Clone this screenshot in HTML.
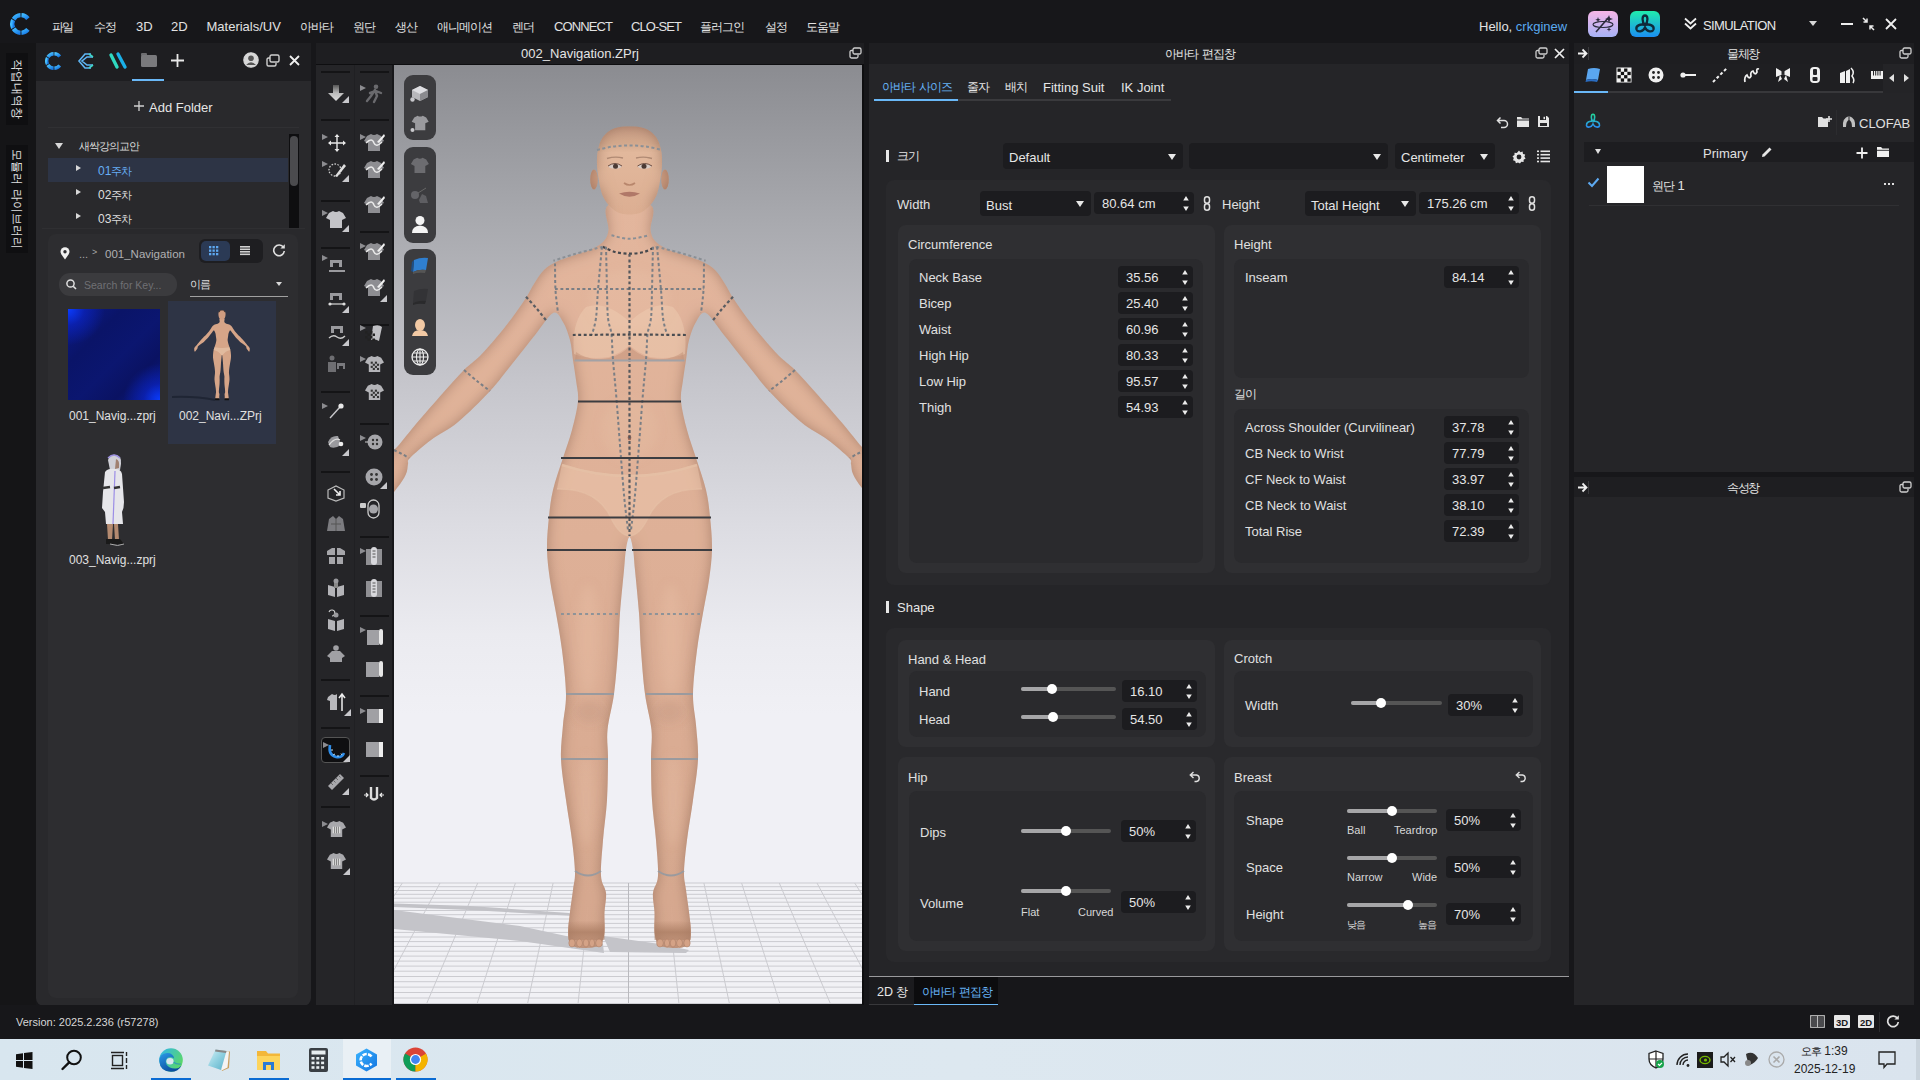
<!DOCTYPE html>
<html><head><meta charset="utf-8">
<style>
*{box-sizing:border-box;margin:0;padding:0}
html,body{width:1920px;height:1080px;overflow:hidden;background:#17171a;font-family:"Liberation Sans",sans-serif;color:#dcdcdc;font-size:13px}
.a{position:absolute}
.t{position:absolute;white-space:nowrap;line-height:1}
.c{text-align:center}
.k{font-size:0.92em;letter-spacing:-0.09em;word-spacing:0.2em}
svg{position:absolute;overflow:visible}
.spin{position:absolute;background:#1c1c1f;border-radius:4px;height:22px}
.spin .v{position:absolute;left:8px;top:5px;font-size:13px;line-height:1;color:#e6e6e6}
.spin .up,.spin .dn{position:absolute;right:6px;width:0;height:0;border-left:2.6px solid transparent;border-right:2.6px solid transparent}
.spin .up{top:4px;border-bottom:4.3px solid #e8e8e8}
.spin .dn{bottom:4px;border-top:4.3px solid #e8e8e8}
.dd{position:absolute;background:#1c1c1f;border-radius:4px;height:26px}
.dd .v{position:absolute;left:6px;top:7px;font-size:13px;line-height:1;color:#e6e6e6}
.dd .ar{position:absolute;right:7px;top:10px;width:0;height:0;border-left:4px solid transparent;border-right:4px solid transparent;border-top:6px solid #e8e8e8}
.lbl{position:absolute;white-space:nowrap;line-height:1;font-size:13px;color:#dedede}
.box1{position:absolute;background:#29292c;border-radius:8px}
.box2{position:absolute;background:#2f2f32;border-radius:8px}
.box3{position:absolute;background:#2a2a2d;border-radius:8px}
.sl{position:absolute;height:4px;background:#555;border-radius:2px}
.sl .f{position:absolute;left:0;top:0;height:4px;background:#a6a6a8;border-radius:2px}
.sl .kn{position:absolute;top:-3px;width:10px;height:10px;margin-left:-5px;background:#fff;border-radius:50%}
</style></head><body>

<div class="a" style="left:0px;top:0px;width:1920px;height:43px;background:#17171a;"></div>
<svg style="left:9px;top:12px" width="24" height="24" viewBox="0 0 24 24"><defs><linearGradient id="lg1" x1="0" y1="0" x2="1" y2="1"><stop offset="0" stop-color="#3fb8ff"/><stop offset="1" stop-color="#1a7de8"/></linearGradient></defs>
<path d="M18.93 6.58 A8.8 8.8 0 0 0 12.46 3.21" fill="none" stroke="url(#lg1)" stroke-width="4.3"/><path d="M11.54 3.21 A8.8 8.8 0 0 0 4.62 7.21" fill="none" stroke="url(#lg1)" stroke-width="4.3"/><path d="M4.16 8.00 A8.8 8.8 0 0 0 4.16 16.00" fill="none" stroke="url(#lg1)" stroke-width="4.3"/><path d="M4.62 16.79 A8.8 8.8 0 0 0 11.54 20.79" fill="none" stroke="url(#lg1)" stroke-width="4.3"/><path d="M12.46 20.79 A8.8 8.8 0 0 0 18.93 17.42" fill="none" stroke="url(#lg1)" stroke-width="4.3"/></svg>
<div class="t" style="left:51.5px;top:19.5px;font-size:13px;color:#e2e2e2;"><span class="k">파일</span></div>
<div class="t" style="left:94px;top:19.5px;font-size:13px;color:#e2e2e2;"><span class="k">수정</span></div>
<div class="t" style="left:136px;top:19.5px;font-size:13px;color:#e2e2e2;">3D</div>
<div class="t" style="left:171px;top:19.5px;font-size:13px;color:#e2e2e2;">2D</div>
<div class="t" style="left:206.5px;top:19.5px;font-size:13px;color:#e2e2e2;">Materials/UV</div>
<div class="t" style="left:300px;top:19.5px;font-size:13px;color:#e2e2e2;"><span class="k">아바타</span></div>
<div class="t" style="left:353px;top:19.5px;font-size:13px;color:#e2e2e2;"><span class="k">원단</span></div>
<div class="t" style="left:395px;top:19.5px;font-size:13px;color:#e2e2e2;"><span class="k">생산</span></div>
<div class="t" style="left:437px;top:19.5px;font-size:13px;color:#e2e2e2;"><span class="k">애니메이션</span></div>
<div class="t" style="left:512px;top:19.5px;font-size:13px;color:#e2e2e2;"><span class="k">렌더</span></div>
<div class="t" style="left:554px;top:19.5px;font-size:13px;color:#e2e2e2;letter-spacing:-0.9px">CONNECT</div>
<div class="t" style="left:631px;top:19.5px;font-size:13px;color:#e2e2e2;letter-spacing:-0.9px">CLO-SET</div>
<div class="t" style="left:700px;top:19.5px;font-size:13px;color:#e2e2e2;"><span class="k">플러그인</span></div>
<div class="t" style="left:765px;top:19.5px;font-size:13px;color:#e2e2e2;"><span class="k">설정</span></div>
<div class="t" style="left:806px;top:19.5px;font-size:13px;color:#e2e2e2;"><span class="k">도움말</span></div>
<div class="t" style="left:1479px;top:19.5px;font-size:13px;color:#e2e2e2;">Hello, <span style="color:#5aaaf0">crkginew</span></div>
<svg style="left:1588px;top:11px" width="30" height="26" viewBox="0 0 30 26"><defs><linearGradient id="ap1" x1="0" y1="0" x2="0" y2="1"><stop offset="0" stop-color="#f6b6e6"/><stop offset="1" stop-color="#a7b2f6"/></linearGradient></defs><rect x="0" y="0" width="30" height="26" rx="6" fill="url(#ap1)"/><path d="M8 21 L21 6" stroke="#2a2a3a" stroke-width="1.6"/><path d="M21 4 L22 7 L25 8 L22 9 L21 12 L20 9 L17 8 L20 7Z M10 6 L10.7 8 L12.7 8.7 L10.7 9.4 L10 11.4 L9.3 9.4 L7.3 8.7 L9.3 8Z M21 16 L21.6 17.8 L23.4 18.4 L21.6 19 L21 20.8 L20.4 19 L18.6 18.4 L20.4 17.8Z" fill="#2a2a3a"/><ellipse cx="15" cy="13.5" rx="10" ry="3" fill="none" stroke="#2a2a3a" stroke-width="1.1"/></svg>
<svg style="left:1630px;top:11px" width="30" height="26" viewBox="0 0 30 26"><defs><linearGradient id="ap2" x1="0" y1="0" x2="0" y2="1"><stop offset="0" stop-color="#20ecac"/><stop offset="1" stop-color="#1b8ef2"/></linearGradient></defs><rect x="0" y="0" width="30" height="26" rx="6" fill="url(#ap2)"/><path d="M15 14 C11.5 10.5 12 4.5 15 4.5 C18 4.5 18.5 10.5 15 14 M15 14 C10 12.5 5.5 15 6.5 18.5 C7.5 21.5 13 21 15 16.5 C17 21 22.5 21.5 23.5 18.5 C24.5 15 20 12.5 15 14" fill="none" stroke="#0f2a3a" stroke-width="2.3"/></svg>
<svg style="left:1684px;top:17px" width="13" height="13" viewBox="0 0 13 13"><path d="M1 1.5 L6.5 6.5 L12 1.5 M1 6.5 L6.5 11.5 L12 6.5" fill="none" stroke="#f0f0f0" stroke-width="1.8"/></svg>
<div class="t" style="left:1703px;top:19.3px;font-size:13px;color:#e8e8e8;letter-spacing:-0.6px">SIMULATION</div>
<div class="a" style="left:1809px;top:21px;width:0;height:0;border-left:4px solid transparent;border-right:4px solid transparent;border-top:5px solid #d8d8d8"></div>
<div class="a" style="left:1841px;top:23px;width:12px;height:2px;background:#eeeeee;"></div>
<svg style="left:1862px;top:17px" width="13" height="14" viewBox="0 0 13 14"><path d="M1 1 L5 5 M5 1.5 V5 H1.5 M12 13 L8 9 M8 12.5 V9 H11.5" fill="none" stroke="#eeeeee" stroke-width="1.5"/></svg>
<svg style="left:1885px;top:18px" width="12" height="12" viewBox="0 0 12 12"><path d="M1 1 L11 11 M11 1 L1 11" stroke="#f0f0f0" stroke-width="1.8"/></svg>
<div class="a" style="left:0px;top:43px;width:36px;height:962px;background:#151517;"></div>
<div class="a" style="left:6px;top:53px;width:22px;height:72px;background:#0f0f11;"></div>
<div class="a" style="left:6px;top:145px;width:22px;height:108px;background:#0f0f11;"></div>
<div class="t" style="left:17px;top:89px;font-size:12px;color:#e0e0e0;transform:translate(-50%,-50%) rotate(90deg);transform-origin:center">작업내역창</div>
<div class="t" style="left:17px;top:199px;font-size:12px;color:#e0e0e0;transform:translate(-50%,-50%) rotate(90deg);transform-origin:center">모듈러 라이브러리</div>
<div class="a" style="left:36px;top:43px;width:275px;height:38px;background:#1e1e21;"></div>
<div class="a" style="left:36px;top:81px;width:275px;height:925px;background:#29292c;border-radius:0 0 8px 8px"></div>
<div class="a" style="left:132px;top:79px;width:32px;height:2px;background:#6ab8f7;"></div>
<svg style="left:44px;top:51px" width="20" height="20" viewBox="0 0 20 20"><defs><linearGradient id="lg2" x1="0" y1="0" x2="1" y2="1"><stop offset="0" stop-color="#4cc4ff"/><stop offset="1" stop-color="#1676e0"/></linearGradient></defs><path d="M15.75 5.51 A7.3 7.3 0 0 0 10.38 2.71" fill="none" stroke="url(#lg2)" stroke-width="3.4"/><path d="M9.62 2.71 A7.3 7.3 0 0 0 3.88 6.02" fill="none" stroke="url(#lg2)" stroke-width="3.4"/><path d="M3.50 6.69 A7.3 7.3 0 0 0 3.50 13.31" fill="none" stroke="url(#lg2)" stroke-width="3.4"/><path d="M3.88 13.98 A7.3 7.3 0 0 0 9.62 17.29" fill="none" stroke="url(#lg2)" stroke-width="3.4"/><path d="M10.38 17.29 A7.3 7.3 0 0 0 15.75 14.49" fill="none" stroke="url(#lg2)" stroke-width="3.4"/></svg>
<svg style="left:76px;top:51px" width="20" height="20" viewBox="0 0 20 20"><path d="M15 3 L9 3 L3 10 L9 17 L15 17 M17 6 L11 6 L6 10 L11 14 L17 14" fill="none" stroke="#5fb6f5" stroke-width="1.6"/><path d="M13 3 L17 6 M13 17 L17 14" stroke="#3fd6c8" stroke-width="1.6"/></svg>
<svg style="left:108px;top:51px" width="20" height="20" viewBox="0 0 20 20"><path d="M3 4 L9 16" stroke="#2fd9c0" stroke-width="3.4" stroke-linecap="round"/><path d="M10 3 L17 16" stroke="#1ab0e8" stroke-width="3.4" stroke-linecap="round"/></svg>
<svg style="left:140px;top:52px" width="18" height="16" viewBox="0 0 18 16"><rect x="1" y="1" width="6" height="3" rx="1" fill="#6d6d70"/><rect x="1" y="3" width="16" height="12" rx="1.5" fill="#7a7a7d"/></svg>
<svg style="left:170px;top:53px" width="15" height="15" viewBox="0 0 15 15"><path d="M7.5 1 V14 M1 7.5 H14" stroke="#e8e8e8" stroke-width="1.8"/></svg>
<svg style="left:243px;top:52px" width="16" height="16" viewBox="0 0 16 16"><circle cx="8" cy="8" r="7.2" fill="#d8d8d8"/><circle cx="8" cy="6.2" r="2.8" fill="#555"/><path d="M3 13 Q8 7.5 13 13" fill="#555"/><circle cx="8" cy="8" r="7.2" fill="none" stroke="#d8d8d8" stroke-width="1.2"/></svg>
<svg style="left:266px;top:54px" width="14" height="13" viewBox="0 0 14 13"><rect x="4" y="1" width="9" height="7" rx="1.5" fill="none" stroke="#cfcfcf" stroke-width="1.4"/><path d="M4 4 H2.5 Q1 4 1 5.5 V10.5 Q1 12 2.5 12 H8.5 Q10 12 10 10.5 V9" fill="none" stroke="#cfcfcf" stroke-width="1.4"/></svg>
<svg style="left:289px;top:55px" width="11" height="11" viewBox="0 0 11 11"><path d="M1 1 L10 10 M10 1 L1 10" stroke="#eeeeee" stroke-width="1.8"/></svg>
<svg style="left:134px;top:101px" width="10" height="10" viewBox="0 0 10 10"><path d="M5 0 V10 M0 5 H10" stroke="#d0d0d0" stroke-width="1.3"/></svg>
<div class="t" style="left:149px;top:100.5px;font-size:13px;color:#e6e6e6;">Add Folder</div>
<div class="a" style="left:48px;top:127px;width:251px;height:1px;background:#303033;"></div>
<div class="a" style="left:55px;top:143px;width:0;height:0;border-left:4.5px solid transparent;border-right:4.5px solid transparent;border-top:6px solid #d8d8d8"></div>
<div class="t" style="left:79px;top:140.3px;font-size:12px;color:#dedede;"><span class="k">새싹강의교안</span></div>
<div class="a" style="left:48px;top:158px;width:240px;height:24px;background:#2d3445;"></div>
<div class="a" style="left:76px;top:165px;width:0;height:0;border-top:3.5px solid transparent;border-bottom:3.5px solid transparent;border-left:5px solid #d8d8d8"></div>
<div class="t" style="left:98px;top:164.8px;font-size:12px;color:#66aef5;">01<span class="k">주차</span></div>
<div class="a" style="left:76px;top:189px;width:0;height:0;border-top:3.5px solid transparent;border-bottom:3.5px solid transparent;border-left:5px solid #d8d8d8"></div>
<div class="t" style="left:98px;top:188.8px;font-size:12px;color:#dedede;">02<span class="k">주차</span></div>
<div class="a" style="left:76px;top:213px;width:0;height:0;border-top:3.5px solid transparent;border-bottom:3.5px solid transparent;border-left:5px solid #d8d8d8"></div>
<div class="t" style="left:98px;top:212.8px;font-size:12px;color:#dedede;">03<span class="k">주차</span></div>
<div class="a" style="left:289px;top:134px;width:10px;height:94px;background:#0e0e10;"></div>
<div class="a" style="left:290px;top:136px;width:8px;height:50px;background:#4b4b4e;border-radius:4px"></div>
<div class="a" style="left:42px;top:228px;width:263px;height:1px;background:#2f2f32;"></div>
<div class="a" style="left:48px;top:234px;width:250px;height:764px;background:#2d2d30;border-radius:8px"></div>
<svg style="left:60px;top:247px" width="10" height="13" viewBox="0 0 10 13"><path d="M5 12.5 C2 8.5 0.5 6.5 0.5 4.8 A4.5 4.5 0 0 1 9.5 4.8 C9.5 6.5 8 8.5 5 12.5Z" fill="#f0f0f0"/><circle cx="5" cy="4.8" r="1.7" fill="#2d2d30"/></svg>
<div class="t" style="left:79px;top:248.7px;font-size:11px;color:#a8a8a8;">...</div>
<div class="t" style="left:92px;top:248.4px;font-size:9px;color:#a8a8a8;">&gt;</div>
<div class="t" style="left:105px;top:248.8px;font-size:11.5px;color:#b0b0b2;">001_Navigation</div>
<div class="a" style="left:199px;top:239px;width:64px;height:24px;background:#1e1e21;border-radius:6px"></div>
<div class="a" style="left:201px;top:241px;width:29px;height:20px;background:#2b3a55;border-radius:5px"></div>
<svg style="left:209px;top:246px" width="10" height="10" viewBox="0 0 10 10"><rect x="0.0" y="0.0" width="2.3" height="2.3" fill="#5ea8f0"/><rect x="3.5" y="0.0" width="2.3" height="2.3" fill="#5ea8f0"/><rect x="7.0" y="0.0" width="2.3" height="2.3" fill="#5ea8f0"/><rect x="0.0" y="3.5" width="2.3" height="2.3" fill="#5ea8f0"/><rect x="3.5" y="3.5" width="2.3" height="2.3" fill="#5ea8f0"/><rect x="7.0" y="3.5" width="2.3" height="2.3" fill="#5ea8f0"/><rect x="0.0" y="7.0" width="2.3" height="2.3" fill="#5ea8f0"/><rect x="3.5" y="7.0" width="2.3" height="2.3" fill="#5ea8f0"/><rect x="7.0" y="7.0" width="2.3" height="2.3" fill="#5ea8f0"/></svg>
<svg style="left:240px;top:246px" width="10" height="10" viewBox="0 0 10 10"><rect x="0" y="0.0" width="10" height="1.6" fill="#d0d0d0"/><rect x="0" y="2.5" width="10" height="1.6" fill="#d0d0d0"/><rect x="0" y="5.0" width="10" height="1.6" fill="#d0d0d0"/><rect x="0" y="7.5" width="10" height="1.6" fill="#d0d0d0"/></svg>
<svg style="left:272px;top:243px" width="14" height="14" viewBox="0 0 14 14"><path d="M11.5 4.5 A5.3 5.3 0 1 0 12.3 8" fill="none" stroke="#e0e0e0" stroke-width="1.6"/><path d="M12.8 1.2 V5.6 H8.4Z" fill="#e0e0e0"/></svg>
<div class="a" style="left:59px;top:273px;width:118px;height:23px;background:#3b3b3e;border-radius:11px"></div>
<svg style="left:66px;top:279px" width="11" height="11" viewBox="0 0 11 11"><circle cx="4.5" cy="4.5" r="3.6" fill="none" stroke="#e0e0e0" stroke-width="1.5"/><path d="M7.2 7.2 L10 10" stroke="#e0e0e0" stroke-width="1.6"/></svg>
<div class="t" style="left:84px;top:279.6px;font-size:10.5px;color:#707074;">Search for Key...</div>
<div class="t" style="left:190px;top:278.3px;font-size:12px;color:#dcdcdc;"><span class="k">이름</span></div>
<div class="a" style="left:276px;top:282px;width:0;height:0;border-left:3px solid transparent;border-right:3px solid transparent;border-top:4px solid #d8d8d8"></div>
<div class="a" style="left:190px;top:296px;width:98px;height:1px;background:#a0a0a0;"></div>
<div class="a" style="left:168px;top:301px;width:108px;height:143px;background:#2e3445;"></div>
<div class="a" style="left:68px;top:309px;width:92px;height:91px;background:radial-gradient(ellipse 40% 40% at 0% 0%,#0a3cff 0%,rgba(10,40,220,0.5) 45%,rgba(10,40,200,0) 100%),radial-gradient(ellipse 40% 40% at 100% 100%,#0a3cff 0%,rgba(10,40,220,0.5) 45%,rgba(10,40,200,0) 100%),linear-gradient(135deg,#0b1a88 0%,#0a1468 30%,#0b1670 55%,#0a1262 75%,#0b1a88 100%)"></div>
<div class="t" style="left:69px;top:409.8px;font-size:12px;color:#e0e0e0;">001_Navig...zprj</div>
<div class="t" style="left:179px;top:409.8px;font-size:12px;color:#e0e0e0;">002_Navi...ZPrj</div>
<div class="t" style="left:69px;top:553.8px;font-size:12px;color:#e0e0e0;">003_Navig...zprj</div>
<div class="a" style="left:316px;top:43px;width:548px;height:21px;background:#1e1e21;"></div>
<div class="a" style="left:316px;top:64px;width:548px;height:1px;background:#0e0e10;"></div>
<div class="t" style="left:380px;width:400px;text-align:center;top:47.0px;font-size:13px;color:#e4e4e4;">002_Navigation.ZPrj</div>
<svg style="left:849px;top:47px" width="13" height="12" viewBox="0 0 13 12"><rect x="4" y="1" width="8" height="6" rx="1.5" fill="none" stroke="#cfcfcf" stroke-width="1.3"/><path d="M4 3.5 H2.5 Q1 3.5 1 5 V9.5 Q1 11 2.5 11 H7.5 Q9 11 9 9.5 V8" fill="none" stroke="#cfcfcf" stroke-width="1.3"/></svg>
<div class="a" style="left:316px;top:65px;width:76px;height:940px;background:#252528;"></div>
<div class="a" style="left:354px;top:65px;width:1px;height:940px;background:#202023;"></div>
<div class="a" style="left:321px;top:71px;width:29px;height:2px;background:#141416;"></div>
<div class="a" style="left:321px;top:119px;width:29px;height:2px;background:#141416;"></div>
<div class="a" style="left:321px;top:200px;width:29px;height:2px;background:#141416;"></div>
<div class="a" style="left:321px;top:247px;width:29px;height:2px;background:#141416;"></div>
<div class="a" style="left:321px;top:391px;width:29px;height:2px;background:#141416;"></div>
<div class="a" style="left:321px;top:471px;width:29px;height:2px;background:#141416;"></div>
<div class="a" style="left:321px;top:679px;width:29px;height:2px;background:#141416;"></div>
<div class="a" style="left:321px;top:727px;width:29px;height:2px;background:#141416;"></div>
<div class="a" style="left:321px;top:806px;width:29px;height:2px;background:#141416;"></div>
<div class="a" style="left:360px;top:71px;width:29px;height:2px;background:#141416;"></div>
<div class="a" style="left:360px;top:119px;width:29px;height:2px;background:#141416;"></div>
<div class="a" style="left:360px;top:231px;width:29px;height:2px;background:#141416;"></div>
<div class="a" style="left:360px;top:324px;width:29px;height:2px;background:#141416;"></div>
<div class="a" style="left:360px;top:423px;width:29px;height:2px;background:#141416;"></div>
<div class="a" style="left:360px;top:536px;width:29px;height:2px;background:#141416;"></div>
<div class="a" style="left:360px;top:615px;width:29px;height:2px;background:#141416;"></div>
<div class="a" style="left:360px;top:695px;width:29px;height:2px;background:#141416;"></div>
<div class="a" style="left:360px;top:775px;width:29px;height:2px;background:#141416;"></div>
<div class="a" style="left:394px;top:65px;width:468px;height:939px;background:linear-gradient(to bottom,#8b8c91 0px,#a9aaaf 160px,#c6c6cc 320px,#dcdce2 460px,#ebebf0 570px,#f0f0f5 650px,#f0f0f5 938px)"></div>
<div class="a" style="left:862px;top:65px;width:2px;height:940px;background:#0e0e10;"></div>
<svg style="left:0;top:0" width="1920" height="1080" viewBox="0 0 1920 1080"><defs>
<filter id="inS" x="-10%" y="-10%" width="120%" height="120%">
<feGaussianBlur in="SourceAlpha" stdDeviation="7" result="b"/>
<feComposite in="SourceAlpha" in2="b" operator="out" result="e"/>
<feFlood flood-color="#825a48" flood-opacity="0.7"/><feComposite in2="e" operator="in" result="sh"/>
<feMerge><feMergeNode in="SourceGraphic"/><feMergeNode in="sh"/></feMerge></filter>
<linearGradient id="skinG" x1="0" y1="0" x2="0" y2="1"><stop offset="0" stop-color="#e3b69d"/><stop offset="0.45" stop-color="#deb097"/><stop offset="1" stop-color="#d6a88f"/></linearGradient>
<linearGradient id="toeG" x1="0" y1="0" x2="0" y2="1"><stop offset="0" stop-color="#a87a60" stop-opacity="0"/><stop offset="0.6" stop-color="#a87a60" stop-opacity="0.75"/><stop offset="1" stop-color="#a87a60" stop-opacity="0.5"/></linearGradient><linearGradient id="headG" x1="0" y1="126" x2="0" y2="215" gradientUnits="userSpaceOnUse"><stop offset="0" stop-color="#c89c84"/><stop offset="0.2" stop-color="#d4aa8e"/><stop offset="0.3" stop-color="#e2b89c"/><stop offset="1" stop-color="#dcae92"/></linearGradient><clipPath id="vpc"><rect x="394" y="65" width="468" height="939"/></clipPath>
</defs>
<g clip-path="url(#vpc)">
<rect x="394" y="883" width="468" height="121" fill="#f1f1f5"/><path d="M394 883.0 H862" stroke="#cbcbd0" stroke-width="1"/><path d="M394 886.7 H862" stroke="#cbcbd0" stroke-width="1"/><path d="M394 890.5 H862" stroke="#cbcbd0" stroke-width="1"/><path d="M394 894.3 H862" stroke="#cbcbd0" stroke-width="1"/><path d="M394 898.2 H862" stroke="#cbcbd0" stroke-width="1"/><path d="M394 902.2 H862" stroke="#cbcbd0" stroke-width="1"/><path d="M394 906.3 H862" stroke="#cbcbd0" stroke-width="1"/><path d="M394 910.5 H862" stroke="#cbcbd0" stroke-width="1"/><path d="M394 914.7 H862" stroke="#cbcbd0" stroke-width="1"/><path d="M394 919.0 H862" stroke="#cbcbd0" stroke-width="1"/><path d="M394 923.4 H862" stroke="#cbcbd0" stroke-width="1"/><path d="M394 927.8 H862" stroke="#cbcbd0" stroke-width="1"/><path d="M394 932.4 H862" stroke="#cbcbd0" stroke-width="1"/><path d="M394 937.0 H862" stroke="#cbcbd0" stroke-width="1"/><path d="M394 941.6 H862" stroke="#cbcbd0" stroke-width="1"/><path d="M394 946.4 H862" stroke="#cbcbd0" stroke-width="1"/><path d="M394 951.2 H862" stroke="#cbcbd0" stroke-width="1"/><path d="M394 956.1 H862" stroke="#cbcbd0" stroke-width="1"/><path d="M394 961.1 H862" stroke="#cbcbd0" stroke-width="1"/><path d="M394 966.1 H862" stroke="#cbcbd0" stroke-width="1"/><path d="M394 971.2 H862" stroke="#cbcbd0" stroke-width="1"/><path d="M394 976.5 H862" stroke="#cbcbd0" stroke-width="1"/><path d="M394 981.7 H862" stroke="#cbcbd0" stroke-width="1"/><path d="M394 987.1 H862" stroke="#cbcbd0" stroke-width="1"/><path d="M394 992.5 H862" stroke="#cbcbd0" stroke-width="1"/><path d="M394 998.0 H862" stroke="#cbcbd0" stroke-width="1"/><path d="M394 1003.6 H862" stroke="#cbcbd0" stroke-width="1"/><path d="M176.1 883 L23.7 1003" stroke="#cbcbd0" stroke-width="1"/><path d="M213.8 883 L74.1 1003" stroke="#cbcbd0" stroke-width="1"/><path d="M251.5 883 L124.5 1003" stroke="#cbcbd0" stroke-width="1"/><path d="M289.2 883 L174.9 1003" stroke="#cbcbd0" stroke-width="1"/><path d="M326.9 883 L225.3 1003" stroke="#cbcbd0" stroke-width="1"/><path d="M364.6 883 L275.7 1003" stroke="#cbcbd0" stroke-width="1"/><path d="M402.3 883 L326.1 1003" stroke="#cbcbd0" stroke-width="1"/><path d="M440.0 883 L376.5 1003" stroke="#cbcbd0" stroke-width="1"/><path d="M477.7 883 L426.9 1003" stroke="#cbcbd0" stroke-width="1"/><path d="M515.4 883 L477.3 1003" stroke="#cbcbd0" stroke-width="1"/><path d="M553.1 883 L527.7 1003" stroke="#cbcbd0" stroke-width="1"/><path d="M590.8 883 L578.1 1003" stroke="#cbcbd0" stroke-width="1"/><path d="M628.5 883 L628.5 1003" stroke="#b9b9be" stroke-width="1"/><path d="M666.2 883 L678.9 1003" stroke="#cbcbd0" stroke-width="1"/><path d="M703.9 883 L729.3 1003" stroke="#cbcbd0" stroke-width="1"/><path d="M741.6 883 L779.7 1003" stroke="#cbcbd0" stroke-width="1"/><path d="M779.3 883 L830.1 1003" stroke="#cbcbd0" stroke-width="1"/><path d="M817.0 883 L880.5 1003" stroke="#cbcbd0" stroke-width="1"/><path d="M854.7 883 L930.9 1003" stroke="#cbcbd0" stroke-width="1"/><path d="M892.4 883 L981.3 1003" stroke="#cbcbd0" stroke-width="1"/><path d="M930.1 883 L1031.7 1003" stroke="#cbcbd0" stroke-width="1"/><path d="M967.8 883 L1082.1 1003" stroke="#cbcbd0" stroke-width="1"/><path d="M1005.5 883 L1132.5 1003" stroke="#cbcbd0" stroke-width="1"/><path d="M1043.2 883 L1182.9 1003" stroke="#cbcbd0" stroke-width="1"/><path d="M1080.9 883 L1233.3 1003" stroke="#cbcbd0" stroke-width="1"/><path d="M394 903.5 L470 906 L569 913 L575 916 L470 910 L394 907Z" fill="#c2c2c7"/><path d="M394 910 L520 926 L603 944 L604 953 L520 941 L394 929Z" fill="#c4c4c9"/><path d="M603 936 L660 944 L689 950 L686 953 L610 952Z" fill="#c4c4c9"/><g filter="url(#inS)"><path d="M608.5 205.0 C601.5 209.2 609.4 223.8 608.5 230.0 C607.6 236.2 606.1 238.7 603.0 242.0 C599.9 245.3 595.2 247.7 590.0 250.0 C584.8 252.3 577.7 254.0 572.0 256.0 C566.3 258.0 560.7 259.7 556.0 262.0 C551.3 264.3 547.7 266.3 544.0 270.0 C540.3 273.7 537.0 279.3 534.0 284.0 C531.0 288.7 529.7 292.3 526.0 298.0 C522.3 303.7 517.0 311.3 512.0 318.0 C507.0 324.7 501.3 331.7 496.0 338.0 C490.7 344.3 485.3 350.7 480.0 356.0 C474.7 361.3 470.2 363.8 464.0 370.0 C457.8 376.2 451.0 384.0 443.0 393.0 C435.0 402.0 423.5 415.2 416.0 424.0 C408.5 432.8 402.7 440.8 398.0 446.0 C393.3 451.2 391.7 450.2 388.0 455.0 C384.3 459.8 377.3 466.7 376.0 475.0 C374.7 483.3 376.5 502.8 380.0 505.0 C383.5 507.2 392.7 493.2 397.0 488.0 C401.3 482.8 404.2 478.0 406.0 474.0 C407.8 470.0 407.3 466.7 408.0 464.0 C408.7 461.3 406.2 462.0 410.0 458.0 C413.8 454.0 423.0 446.0 431.0 440.0 C439.0 434.0 448.2 430.2 458.0 422.0 C467.8 413.8 481.0 400.7 490.0 391.0 C499.0 381.3 504.5 373.3 512.0 364.0 C519.5 354.7 528.2 343.5 535.0 335.0 C541.8 326.5 548.3 315.2 553.0 313.0 C557.7 310.8 560.2 317.5 563.0 322.0 C565.8 326.5 568.3 333.7 570.0 340.0 C571.7 346.3 572.0 353.3 573.0 360.0 C574.0 366.7 575.2 373.2 576.0 380.0 C576.8 386.8 578.7 392.7 578.0 401.0 C577.3 409.3 574.5 420.5 572.0 430.0 C569.5 439.5 566.2 448.0 563.0 458.0 C559.8 468.0 555.3 480.2 553.0 490.0 C550.7 499.8 550.0 507.2 549.0 517.0 C548.0 526.8 546.8 538.5 547.0 549.0 C547.2 559.5 548.5 569.3 550.0 580.0 C551.5 590.7 554.0 601.3 556.0 613.0 C558.0 624.7 560.3 636.5 562.0 650.0 C563.7 663.5 565.8 681.5 566.0 694.0 C566.2 706.5 563.8 714.2 563.0 725.0 C562.2 735.8 560.5 746.5 561.0 759.0 C561.5 771.5 564.2 786.5 566.0 800.0 C567.8 813.5 570.5 828.0 572.0 840.0 C573.5 852.0 574.8 863.7 575.0 872.0 C575.2 880.3 573.8 883.3 573.0 890.0 C572.2 896.7 570.8 905.0 570.0 912.0 C569.2 919.0 568.0 926.8 568.0 932.0 C568.0 937.2 568.5 940.4 570.0 943.0 C571.5 945.6 573.3 946.8 577.0 947.5 C580.7 948.2 588.0 948.1 592.0 947.5 C596.0 946.9 598.9 946.6 601.0 944.0 C603.1 941.4 603.9 937.3 604.5 932.0 C605.1 926.7 604.2 918.5 604.5 912.0 C604.8 905.5 606.6 899.0 606.0 893.0 C605.4 887.0 601.5 884.8 601.0 876.0 C600.5 867.2 602.0 852.7 603.0 840.0 C604.0 827.3 606.2 813.5 607.0 800.0 C607.8 786.5 607.9 770.7 608.0 759.0 C608.1 747.3 606.5 740.8 607.5 730.0 C608.5 719.2 612.2 707.3 614.0 694.0 C615.8 680.7 617.0 663.5 618.0 650.0 C619.0 636.5 619.0 626.3 620.0 613.0 C621.0 599.7 623.0 580.7 624.0 570.0 C625.0 559.3 625.1 554.5 626.0 549.0 C626.9 543.5 628.3 537.0 629.5 537.0 C630.7 537.0 632.1 543.5 633.0 549.0 C633.9 554.5 634.0 559.3 635.0 570.0 C636.0 580.7 638.0 599.7 639.0 613.0 C640.0 626.3 640.0 636.5 641.0 650.0 C642.0 663.5 643.2 680.7 645.0 694.0 C646.8 707.3 650.5 719.2 651.5 730.0 C652.5 740.8 650.9 747.3 651.0 759.0 C651.1 770.7 651.2 786.5 652.0 800.0 C652.8 813.5 655.0 827.3 656.0 840.0 C657.0 852.7 658.5 867.2 658.0 876.0 C657.5 884.8 653.6 887.0 653.0 893.0 C652.4 899.0 654.2 905.5 654.5 912.0 C654.8 918.5 653.9 926.7 654.5 932.0 C655.1 937.3 655.9 941.4 658.0 944.0 C660.1 946.6 663.0 946.9 667.0 947.5 C671.0 948.1 678.3 948.2 682.0 947.5 C685.7 946.8 687.5 945.6 689.0 943.0 C690.5 940.4 691.0 937.2 691.0 932.0 C691.0 926.8 689.8 919.0 689.0 912.0 C688.2 905.0 686.8 896.7 686.0 890.0 C685.2 883.3 683.8 880.3 684.0 872.0 C684.2 863.7 685.5 852.0 687.0 840.0 C688.5 828.0 691.2 813.5 693.0 800.0 C694.8 786.5 697.5 771.5 698.0 759.0 C698.5 746.5 696.8 735.8 696.0 725.0 C695.2 714.2 692.8 706.5 693.0 694.0 C693.2 681.5 695.3 663.5 697.0 650.0 C698.7 636.5 701.0 624.7 703.0 613.0 C705.0 601.3 707.5 590.7 709.0 580.0 C710.5 569.3 711.8 559.5 712.0 549.0 C712.2 538.5 711.0 526.8 710.0 517.0 C709.0 507.2 708.3 499.8 706.0 490.0 C703.7 480.2 699.2 468.0 696.0 458.0 C692.8 448.0 689.5 439.5 687.0 430.0 C684.5 420.5 681.7 409.3 681.0 401.0 C680.3 392.7 682.2 386.8 683.0 380.0 C683.8 373.2 685.0 366.7 686.0 360.0 C687.0 353.3 687.3 346.3 689.0 340.0 C690.7 333.7 693.2 326.5 696.0 322.0 C698.8 317.5 701.3 310.8 706.0 313.0 C710.7 315.2 717.2 326.5 724.0 335.0 C730.8 343.5 739.5 354.7 747.0 364.0 C754.5 373.3 760.0 381.3 769.0 391.0 C778.0 400.7 791.2 413.8 801.0 422.0 C810.8 430.2 820.0 434.0 828.0 440.0 C836.0 446.0 845.2 454.0 849.0 458.0 C852.8 462.0 850.3 461.3 851.0 464.0 C851.7 466.7 851.2 470.0 853.0 474.0 C854.8 478.0 857.7 482.8 862.0 488.0 C866.3 493.2 875.5 507.2 879.0 505.0 C882.5 502.8 884.3 483.3 883.0 475.0 C881.7 466.7 874.7 459.8 871.0 455.0 C867.3 450.2 865.7 451.2 861.0 446.0 C856.3 440.8 850.5 432.8 843.0 424.0 C835.5 415.2 824.0 402.0 816.0 393.0 C808.0 384.0 801.2 376.2 795.0 370.0 C788.8 363.8 784.3 361.3 779.0 356.0 C773.7 350.7 768.3 344.3 763.0 338.0 C757.7 331.7 752.0 324.7 747.0 318.0 C742.0 311.3 736.7 303.7 733.0 298.0 C729.3 292.3 728.0 288.7 725.0 284.0 C722.0 279.3 718.7 273.7 715.0 270.0 C711.3 266.3 707.7 264.3 703.0 262.0 C698.3 259.7 692.7 258.0 687.0 256.0 C681.3 254.0 674.2 252.3 669.0 250.0 C663.8 247.7 659.1 245.3 656.0 242.0 C652.9 238.7 651.4 236.2 650.5 230.0 C649.6 223.8 657.5 209.2 650.5 205.0 C643.5 200.8 615.5 200.8 608.5 205.0 Z" fill="url(#skinG)"/>
<path d="M629.5 126.5 C624.3 126.5 618.4 126.8 614.0 128.5 C609.6 130.2 605.7 133.4 603.0 137.0 C600.3 140.6 599.0 145.3 598.0 150.0 C597.0 154.7 596.8 159.8 597.0 165.0 C597.2 170.2 598.2 176.2 599.0 181.0 C599.8 185.8 600.7 190.3 602.0 194.0 C603.3 197.7 605.0 200.3 607.0 203.0 C609.0 205.7 611.7 208.2 614.0 210.0 C616.3 211.8 618.4 212.8 621.0 213.5 C623.6 214.2 626.7 214.5 629.5 214.5 C632.3 214.5 635.4 214.2 638.0 213.5 C640.6 212.8 642.7 211.8 645.0 210.0 C647.3 208.2 650.0 205.7 652.0 203.0 C654.0 200.3 655.7 197.7 657.0 194.0 C658.3 190.3 659.2 185.8 660.0 181.0 C660.8 176.2 661.8 170.2 662.0 165.0 C662.2 159.8 662.0 154.7 661.0 150.0 C660.0 145.3 658.7 140.6 656.0 137.0 C653.3 133.4 649.4 130.2 645.0 128.5 C640.6 126.8 634.7 126.5 629.5 126.5 Z" fill="url(#headG)"/>
<ellipse cx="594" cy="179.5" rx="3.8" ry="10" fill="#d2a084"/><ellipse cx="665" cy="179.5" rx="3.8" ry="10" fill="#d2a084"/>
</g><path d="M568.5 922 Q586.5 919 604.5 922 L604.5 940 L568.5 940Z" fill="url(#toeG)"/><ellipse cx="572.0" cy="943" rx="3.2" ry="4" fill="#d4a286" stroke="#a67860" stroke-width="0.5"/><ellipse cx="579.5" cy="943" rx="3" ry="4" fill="#d4a286" stroke="#a67860" stroke-width="0.5"/><ellipse cx="586.0" cy="943" rx="2.8" ry="4" fill="#d4a286" stroke="#a67860" stroke-width="0.5"/><ellipse cx="592.0" cy="943" rx="2.6" ry="4" fill="#d4a286" stroke="#a67860" stroke-width="0.5"/><ellipse cx="599.0" cy="943" rx="3.4" ry="4" fill="#d4a286" stroke="#a67860" stroke-width="0.5"/><path d="M654.5 922 Q672.5 919 690.5 922 L690.5 940 L654.5 940Z" fill="url(#toeG)"/><ellipse cx="660.0" cy="943" rx="3.4" ry="4" fill="#d4a286" stroke="#a67860" stroke-width="0.5"/><ellipse cx="667.0" cy="943" rx="2.6" ry="4" fill="#d4a286" stroke="#a67860" stroke-width="0.5"/><ellipse cx="673.0" cy="943" rx="2.8" ry="4" fill="#d4a286" stroke="#a67860" stroke-width="0.5"/><ellipse cx="679.5" cy="943" rx="3" ry="4" fill="#d4a286" stroke="#a67860" stroke-width="0.5"/><ellipse cx="687.0" cy="943" rx="3.2" ry="4" fill="#d4a286" stroke="#a67860" stroke-width="0.5"/><defs><clipPath id="bodyClip"><path d="M608.5 205.0 C601.5 209.2 609.4 223.8 608.5 230.0 C607.6 236.2 606.1 238.7 603.0 242.0 C599.9 245.3 595.2 247.7 590.0 250.0 C584.8 252.3 577.7 254.0 572.0 256.0 C566.3 258.0 560.7 259.7 556.0 262.0 C551.3 264.3 547.7 266.3 544.0 270.0 C540.3 273.7 537.0 279.3 534.0 284.0 C531.0 288.7 529.7 292.3 526.0 298.0 C522.3 303.7 517.0 311.3 512.0 318.0 C507.0 324.7 501.3 331.7 496.0 338.0 C490.7 344.3 485.3 350.7 480.0 356.0 C474.7 361.3 470.2 363.8 464.0 370.0 C457.8 376.2 451.0 384.0 443.0 393.0 C435.0 402.0 423.5 415.2 416.0 424.0 C408.5 432.8 402.7 440.8 398.0 446.0 C393.3 451.2 391.7 450.2 388.0 455.0 C384.3 459.8 377.3 466.7 376.0 475.0 C374.7 483.3 376.5 502.8 380.0 505.0 C383.5 507.2 392.7 493.2 397.0 488.0 C401.3 482.8 404.2 478.0 406.0 474.0 C407.8 470.0 407.3 466.7 408.0 464.0 C408.7 461.3 406.2 462.0 410.0 458.0 C413.8 454.0 423.0 446.0 431.0 440.0 C439.0 434.0 448.2 430.2 458.0 422.0 C467.8 413.8 481.0 400.7 490.0 391.0 C499.0 381.3 504.5 373.3 512.0 364.0 C519.5 354.7 528.2 343.5 535.0 335.0 C541.8 326.5 548.3 315.2 553.0 313.0 C557.7 310.8 560.2 317.5 563.0 322.0 C565.8 326.5 568.3 333.7 570.0 340.0 C571.7 346.3 572.0 353.3 573.0 360.0 C574.0 366.7 575.2 373.2 576.0 380.0 C576.8 386.8 578.7 392.7 578.0 401.0 C577.3 409.3 574.5 420.5 572.0 430.0 C569.5 439.5 566.2 448.0 563.0 458.0 C559.8 468.0 555.3 480.2 553.0 490.0 C550.7 499.8 550.0 507.2 549.0 517.0 C548.0 526.8 546.8 538.5 547.0 549.0 C547.2 559.5 548.5 569.3 550.0 580.0 C551.5 590.7 554.0 601.3 556.0 613.0 C558.0 624.7 560.3 636.5 562.0 650.0 C563.7 663.5 565.8 681.5 566.0 694.0 C566.2 706.5 563.8 714.2 563.0 725.0 C562.2 735.8 560.5 746.5 561.0 759.0 C561.5 771.5 564.2 786.5 566.0 800.0 C567.8 813.5 570.5 828.0 572.0 840.0 C573.5 852.0 574.8 863.7 575.0 872.0 C575.2 880.3 573.8 883.3 573.0 890.0 C572.2 896.7 570.8 905.0 570.0 912.0 C569.2 919.0 568.0 926.8 568.0 932.0 C568.0 937.2 568.5 940.4 570.0 943.0 C571.5 945.6 573.3 946.8 577.0 947.5 C580.7 948.2 588.0 948.1 592.0 947.5 C596.0 946.9 598.9 946.6 601.0 944.0 C603.1 941.4 603.9 937.3 604.5 932.0 C605.1 926.7 604.2 918.5 604.5 912.0 C604.8 905.5 606.6 899.0 606.0 893.0 C605.4 887.0 601.5 884.8 601.0 876.0 C600.5 867.2 602.0 852.7 603.0 840.0 C604.0 827.3 606.2 813.5 607.0 800.0 C607.8 786.5 607.9 770.7 608.0 759.0 C608.1 747.3 606.5 740.8 607.5 730.0 C608.5 719.2 612.2 707.3 614.0 694.0 C615.8 680.7 617.0 663.5 618.0 650.0 C619.0 636.5 619.0 626.3 620.0 613.0 C621.0 599.7 623.0 580.7 624.0 570.0 C625.0 559.3 625.1 554.5 626.0 549.0 C626.9 543.5 628.3 537.0 629.5 537.0 C630.7 537.0 632.1 543.5 633.0 549.0 C633.9 554.5 634.0 559.3 635.0 570.0 C636.0 580.7 638.0 599.7 639.0 613.0 C640.0 626.3 640.0 636.5 641.0 650.0 C642.0 663.5 643.2 680.7 645.0 694.0 C646.8 707.3 650.5 719.2 651.5 730.0 C652.5 740.8 650.9 747.3 651.0 759.0 C651.1 770.7 651.2 786.5 652.0 800.0 C652.8 813.5 655.0 827.3 656.0 840.0 C657.0 852.7 658.5 867.2 658.0 876.0 C657.5 884.8 653.6 887.0 653.0 893.0 C652.4 899.0 654.2 905.5 654.5 912.0 C654.8 918.5 653.9 926.7 654.5 932.0 C655.1 937.3 655.9 941.4 658.0 944.0 C660.1 946.6 663.0 946.9 667.0 947.5 C671.0 948.1 678.3 948.2 682.0 947.5 C685.7 946.8 687.5 945.6 689.0 943.0 C690.5 940.4 691.0 937.2 691.0 932.0 C691.0 926.8 689.8 919.0 689.0 912.0 C688.2 905.0 686.8 896.7 686.0 890.0 C685.2 883.3 683.8 880.3 684.0 872.0 C684.2 863.7 685.5 852.0 687.0 840.0 C688.5 828.0 691.2 813.5 693.0 800.0 C694.8 786.5 697.5 771.5 698.0 759.0 C698.5 746.5 696.8 735.8 696.0 725.0 C695.2 714.2 692.8 706.5 693.0 694.0 C693.2 681.5 695.3 663.5 697.0 650.0 C698.7 636.5 701.0 624.7 703.0 613.0 C705.0 601.3 707.5 590.7 709.0 580.0 C710.5 569.3 711.8 559.5 712.0 549.0 C712.2 538.5 711.0 526.8 710.0 517.0 C709.0 507.2 708.3 499.8 706.0 490.0 C703.7 480.2 699.2 468.0 696.0 458.0 C692.8 448.0 689.5 439.5 687.0 430.0 C684.5 420.5 681.7 409.3 681.0 401.0 C680.3 392.7 682.2 386.8 683.0 380.0 C683.8 373.2 685.0 366.7 686.0 360.0 C687.0 353.3 687.3 346.3 689.0 340.0 C690.7 333.7 693.2 326.5 696.0 322.0 C698.8 317.5 701.3 310.8 706.0 313.0 C710.7 315.2 717.2 326.5 724.0 335.0 C730.8 343.5 739.5 354.7 747.0 364.0 C754.5 373.3 760.0 381.3 769.0 391.0 C778.0 400.7 791.2 413.8 801.0 422.0 C810.8 430.2 820.0 434.0 828.0 440.0 C836.0 446.0 845.2 454.0 849.0 458.0 C852.8 462.0 850.3 461.3 851.0 464.0 C851.7 466.7 851.2 470.0 853.0 474.0 C854.8 478.0 857.7 482.8 862.0 488.0 C866.3 493.2 875.5 507.2 879.0 505.0 C882.5 502.8 884.3 483.3 883.0 475.0 C881.7 466.7 874.7 459.8 871.0 455.0 C867.3 450.2 865.7 451.2 861.0 446.0 C856.3 440.8 850.5 432.8 843.0 424.0 C835.5 415.2 824.0 402.0 816.0 393.0 C808.0 384.0 801.2 376.2 795.0 370.0 C788.8 363.8 784.3 361.3 779.0 356.0 C773.7 350.7 768.3 344.3 763.0 338.0 C757.7 331.7 752.0 324.7 747.0 318.0 C742.0 311.3 736.7 303.7 733.0 298.0 C729.3 292.3 728.0 288.7 725.0 284.0 C722.0 279.3 718.7 273.7 715.0 270.0 C711.3 266.3 707.7 264.3 703.0 262.0 C698.3 259.7 692.7 258.0 687.0 256.0 C681.3 254.0 674.2 252.3 669.0 250.0 C663.8 247.7 659.1 245.3 656.0 242.0 C652.9 238.7 651.4 236.2 650.5 230.0 C649.6 223.8 657.5 209.2 650.5 205.0 C643.5 200.8 615.5 200.8 608.5 205.0 Z"/></clipPath><filter id="blur5" x="-50%" y="-50%" width="200%" height="200%"><feGaussianBlur stdDeviation="5"/></filter></defs><g clip-path="url(#bodyClip)"><g filter="url(#blur5)"><ellipse cx="590" cy="712" rx="15" ry="11" fill="#8e6450" opacity="0.12"/><ellipse cx="588" cy="640" rx="11" ry="55" fill="#eac2a8" opacity="0.35"/><ellipse cx="586" cy="800" rx="8" ry="45" fill="#eac2a8" opacity="0.3"/><ellipse cx="669" cy="712" rx="15" ry="11" fill="#8e6450" opacity="0.12"/><ellipse cx="671" cy="640" rx="11" ry="55" fill="#eac2a8" opacity="0.35"/><ellipse cx="673" cy="800" rx="8" ry="45" fill="#eac2a8" opacity="0.3"/><ellipse cx="629.5" cy="300" rx="40" ry="30" fill="#ecc4aa" opacity="0.3"/><ellipse cx="629.5" cy="430" rx="28" ry="30" fill="#e8c0a6" opacity="0.3"/></g></g><path d="M562 464 Q629.5 486 697 464 L702 489 Q662 488 648 518 Q640 535 629.5 536 Q619 535 611 518 Q597 488 557 489Z" fill="#ebc6ab" opacity="0.5"/><path d="M562 465 Q629.5 487 697 465" fill="none" stroke="#e6c2a6" stroke-width="2.5" opacity="0.7"/><path d="M702 489 Q662 488 648 518 Q640 535 629.5 536 Q619 535 611 518 Q597 488 557 489" fill="none" stroke="#e6c2a6" stroke-width="1.5" opacity="0.6"/><path d="M574 354 Q571 322 586 307 Q606 300 629.5 322 Q653 300 673 307 Q688 322 685 354 Q670 360 650 357 Q636 352 629.5 345 Q623 352 609 357 Q589 360 574 354Z" fill="#efcfb4" opacity="0.45"/><path d="M576 352 Q590 362 609 358 Q623 354 629.5 346 Q636 354 650 358 Q669 362 683 352 L684 360 L575 360Z" fill="#b58268" opacity="0.35"/><ellipse cx="615" cy="166.3" rx="6.5" ry="2.3" fill="#d8ccc6"/><ellipse cx="644.5" cy="166.3" rx="6.5" ry="2.3" fill="#d8ccc6"/>
<circle cx="615.5" cy="166.3" r="2.5" fill="#4a3a34"/><circle cx="644" cy="166.3" r="2.5" fill="#4a3a34"/>
<path d="M608 166 Q615 161 622 166 M637.5 166 Q644.5 161 652 166" stroke="#6a4e44" stroke-width="1" fill="none"/>
<path d="M607 158.5 Q615 156 623 158 M636 158 Q644 156 652 158.5" stroke="#b08a74" stroke-width="1.4" fill="none"/>
<path d="M624 183 Q629.5 187 635 183" stroke="#b8866c" stroke-width="1.6" fill="none"/>
<path d="M619 193.5 Q629.5 190 640 193.5 Q629.5 200 619 193.5Z" fill="#b07868"/>
<ellipse cx="629.5" cy="437.5" rx="1.8" ry="2.8" fill="#a26a58"/><path d="M597.0 150.0 C599.7 149.4 607.6 147.2 613.0 146.5 C618.4 145.8 624.0 145.5 629.5 145.5 C635.0 145.5 640.6 145.8 646.0 146.5 C651.4 147.2 659.3 149.4 662.0 150.0" fill="none" stroke="#8a9096" stroke-width="2" stroke-dasharray="3 2.5"/><path d="M611.5 235.3 C614.5 235.9 623.2 238.8 629.5 238.8 C635.8 238.8 646.0 235.9 649.3 235.3" fill="none" stroke="#8a8f95" stroke-width="2" stroke-dasharray="3 2.5"/><path d="M602.7 246.7 C604.8 247.6 610.5 250.8 615.0 252.0 C619.5 253.2 624.7 253.7 629.5 253.7 C634.3 253.7 639.7 253.2 644.0 252.0 C648.3 250.8 653.5 247.6 655.4 246.7" fill="none" stroke="#45484d" stroke-width="2.2" stroke-dasharray="3 2.5"/><path d="M602.7 246.7 C597.7 248.0 581.0 252.2 572.8 254.6 C564.6 256.9 556.6 259.8 553.4 260.8" fill="none" stroke="#8a8f95" stroke-width="2" stroke-dasharray="3 2.5"/><path d="M656.3 246.7 C661.3 248.0 678.0 252.2 686.2 254.6 C694.4 256.9 702.4 259.8 705.6 260.8" fill="none" stroke="#8a8f95" stroke-width="2" stroke-dasharray="3 2.5"/><path d="M555.0 263.4 C555.1 267.8 555.0 281.7 555.5 290.0 C556.0 298.3 557.6 309.2 558.0 313.0" fill="none" stroke="#7a7e84" stroke-width="2" stroke-dasharray="3 2.5"/><path d="M704.0 263.4 C703.9 267.8 704.0 281.7 703.5 290.0 C703.0 298.3 701.4 309.2 701.0 313.0" fill="none" stroke="#7a7e84" stroke-width="2" stroke-dasharray="3 2.5"/><path d="M555.0 289.0 C567.4 289.0 604.7 289.0 629.5 289.0 C654.3 289.0 691.6 289.0 704.0 289.0" fill="none" stroke="#7a7e84" stroke-width="2" stroke-dasharray="3 2.5"/><path d="M602.0 246.7 C601.3 253.9 599.0 278.1 598.0 290.0 C597.0 301.9 597.0 310.6 596.0 318.0 C595.0 325.4 592.7 331.8 592.0 334.6" fill="none" stroke="#7a7e84" stroke-width="2" stroke-dasharray="3 2.5"/><path d="M657.0 246.7 C657.7 253.9 660.0 278.1 661.0 290.0 C662.0 301.9 662.0 310.6 663.0 318.0 C664.0 325.4 666.3 331.8 667.0 334.6" fill="none" stroke="#7a7e84" stroke-width="2" stroke-dasharray="3 2.5"/><path d="M606.0 246.7 C606.2 253.9 606.7 278.1 607.0 290.0 C607.3 301.9 607.2 310.6 608.0 318.0 C608.8 325.4 610.7 327.6 611.5 334.6 C612.3 341.6 612.1 348.9 613.0 360.0 C613.9 371.1 615.4 385.2 616.7 401.5 C618.0 417.8 619.7 441.6 621.0 458.0 C622.3 474.4 623.3 488.0 624.5 500.0 C625.7 512.0 627.4 525.0 628.0 530.0" fill="none" stroke="#7a7e84" stroke-width="2" stroke-dasharray="3 2.5"/><path d="M653.0 246.7 C652.8 253.9 652.3 278.1 652.0 290.0 C651.7 301.9 651.8 310.6 651.0 318.0 C650.2 325.4 648.3 327.6 647.5 334.6 C646.7 341.6 646.9 348.9 646.0 360.0 C645.1 371.1 643.6 385.2 642.3 401.5 C641.0 417.8 639.3 441.6 638.0 458.0 C636.7 474.4 635.7 488.0 634.5 500.0 C633.3 512.0 631.6 525.0 631.0 530.0" fill="none" stroke="#7a7e84" stroke-width="2" stroke-dasharray="3 2.5"/><path d="M629.5 254.0 C629.5 278.3 629.5 353.0 629.5 400.0 C629.5 447.0 629.5 513.3 629.5 536.0" fill="none" stroke="#56595e" stroke-width="2.2" stroke-dasharray="3 2.5"/><path d="M572.8 335.0 C582.2 334.9 610.6 334.6 629.5 334.6 C648.4 334.6 676.8 334.9 686.2 335.0" fill="none" stroke="#4a4d52" stroke-width="2.2" stroke-dasharray="3 2.5"/><path d="M574.5 360.5 L684.5 360.5" stroke="#a2a2a6" stroke-width="2.2"/><path d="M578 401.5 L681 401.5" stroke="#3c3d41" stroke-width="2.2"/><path d="M561 458 L698 458" stroke="#3c3d41" stroke-width="2.2"/><path d="M548 517.5 L711 517.5" stroke="#3c3d41" stroke-width="2.2"/><path d="M547 550 L626 550" stroke="#3c3d41" stroke-width="2.2"/><path d="M632 550 L712 550" stroke="#3c3d41" stroke-width="2.2"/><path d="M526.0 296.8 C527.8 298.8 533.5 304.9 537.0 309.0 C540.5 313.1 545.3 319.4 547.0 321.5" fill="none" stroke="#5a5d62" stroke-width="2.2" stroke-dasharray="3 2.5"/><path d="M733.0 296.8 C731.2 298.8 725.5 304.9 722.0 309.0 C718.5 313.1 713.7 319.4 712.0 321.5" fill="none" stroke="#5a5d62" stroke-width="2.2" stroke-dasharray="3 2.5"/><path d="M464.0 370.0 C466.2 371.8 472.7 377.5 477.0 381.0 C481.3 384.5 487.8 389.3 490.0 391.0" fill="none" stroke="#7a7e84" stroke-width="2" stroke-dasharray="3 2.5"/><path d="M795.0 370.0 C792.8 371.8 786.3 377.5 782.0 381.0 C777.7 384.5 771.2 389.3 769.0 391.0" fill="none" stroke="#7a7e84" stroke-width="2" stroke-dasharray="3 2.5"/><path d="M394.0 450.0 C395.3 450.7 399.5 452.7 402.0 454.0 C404.5 455.3 407.8 457.3 409.0 458.0" fill="none" stroke="#7a7e84" stroke-width="2" stroke-dasharray="3 2.5"/><path d="M865.0 450.0 C863.7 450.7 859.5 452.7 857.0 454.0 C854.5 455.3 851.2 457.3 850.0 458.0" fill="none" stroke="#7a7e84" stroke-width="2" stroke-dasharray="3 2.5"/><path d="M561.0 614.0 C565.8 614.0 580.3 614.0 590.0 614.0 C599.7 614.0 614.2 614.0 619.0 614.0" fill="none" stroke="#8e9398" stroke-width="1.8" stroke-dasharray="3 3"/><path d="M643.0 614.0 C647.8 614.0 662.5 614.0 672.0 614.0 C681.5 614.0 695.3 614.0 700.0 614.0" fill="none" stroke="#8e9398" stroke-width="1.8" stroke-dasharray="3 3"/><path d="M566 694 L614 694" stroke="#9a9a9e" stroke-width="2"/><path d="M646 694 L693 694" stroke="#9a9a9e" stroke-width="2"/><path d="M561 759 L608 759" stroke="#9a9a9e" stroke-width="2"/><path d="M651 759 L698 759" stroke="#9a9a9e" stroke-width="2"/><path d="M575 871 Q588 880 601 871" stroke="#9a9a9e" stroke-width="2" fill="none"/><path d="M658 871 Q671 880 684 871" stroke="#9a9a9e" stroke-width="2" fill="none"/></g></svg>
<div class="a" style="left:869px;top:43px;width:700px;height:21px;background:#1e1e21;"></div>
<div class="a" style="left:869px;top:64px;width:700px;height:912px;background:#252528;"></div>
<div class="t" style="left:1000px;width:400px;text-align:center;top:47.0px;font-size:13px;color:#e4e4e4;"><span class="k">아바타 편집창</span></div>
<svg style="left:1535px;top:47px" width="13" height="12" viewBox="0 0 13 12"><rect x="4" y="1" width="8" height="6" rx="1.5" fill="none" stroke="#cfcfcf" stroke-width="1.3"/><path d="M4 3.5 H2.5 Q1 3.5 1 5 V9.5 Q1 11 2.5 11 H7.5 Q9 11 9 9.5 V8" fill="none" stroke="#cfcfcf" stroke-width="1.3"/></svg>
<svg style="left:1554px;top:48px" width="11" height="11" viewBox="0 0 11 11"><path d="M1 1 L10 10 M10 1 L1 10" stroke="#eeeeee" stroke-width="1.7"/></svg>
<div class="a" style="left:1569px;top:43px;width:5px;height:962px;background:#17171a;"></div>
<div class="a" style="left:874px;top:99px;width:297px;height:2px;background:#3a3a3d;"></div>
<div class="a" style="left:874px;top:99px;width:84px;height:2px;background:#6ab8f7;"></div>
<div class="t" style="left:882px;top:81.4px;font-size:12.5px;color:#66b2f5;"><span class="k">아바타 사이즈</span></div>
<div class="t" style="left:967px;top:81.4px;font-size:12.5px;color:#e6e6e6;"><span class="k">줄자</span></div>
<div class="t" style="left:1005px;top:81.4px;font-size:12.5px;color:#e6e6e6;"><span class="k">배치</span></div>
<div class="t" style="left:1043px;top:81.0px;font-size:13px;color:#e6e6e6;">Fitting Suit</div>
<div class="t" style="left:1121px;top:81.0px;font-size:13px;color:#e6e6e6;">IK Joint</div>
<svg style="left:1496px;top:116px" width="13" height="12" viewBox="0 0 13 12"><path d="M4.5 1.5 L1.5 4.5 L4.5 7.5 M1.8 4.5 H8 A3.5 3.5 0 0 1 8 11.5 H5" fill="none" stroke="#e0e0e0" stroke-width="1.5"/></svg>
<svg style="left:1516px;top:115px" width="14" height="13" viewBox="0 0 14 13"><path d="M1 2 H5 L6.5 3.5 H13 V12 H1Z" fill="#e6e6e6"/><path d="M1 5 H13" stroke="#252528" stroke-width="1"/></svg>
<svg style="left:1537px;top:115px" width="13" height="13" viewBox="0 0 13 13"><path d="M1 1 H10 L12 3 V12 H1Z" fill="#e6e6e6"/><rect x="3" y="1" width="6" height="4" fill="#252528"/><rect x="6.5" y="1.8" width="1.5" height="2.4" fill="#e6e6e6"/><rect x="3" y="8" width="7" height="3" fill="#252528"/></svg>
<div class="a" style="left:886px;top:150px;width:3px;height:12px;background:#e8e8e8;"></div>
<div class="t" style="left:897px;top:150.4px;font-size:12.5px;color:#e6e6e6;"><span class="k">크기</span></div>
<div class="dd" style="left:1003px;top:143px;width:180px;height:26px"><div class="v" style="top:8.0px">Default</div><div class="ar" style="top:10.5px"></div></div>
<div class="dd" style="left:1189px;top:143px;width:199px;height:26px"><div class="v" style="top:8.0px"></div><div class="ar" style="top:10.5px"></div></div>
<div class="dd" style="left:1395px;top:143px;width:100px;height:26px"><div class="v" style="top:8.0px">Centimeter</div><div class="ar" style="top:10.5px"></div></div>
<svg style="left:1512px;top:150px" width="14" height="14" viewBox="0 0 14 14"><path d="M7 0.5 L8.4 2.3 L10.6 1.6 L11 3.9 L13.2 4.6 L12.4 6.8 L13.6 8.6 L11.6 9.8 L11.6 12 L9.3 11.8 L8 13.6 L6 12.4 L3.9 13.3 L3.2 11 L1 10.3 L1.8 8.1 L0.5 6.2 L2.5 5 L2.5 2.8 L4.8 3 Z" fill="#e6e6e6"/><circle cx="7" cy="7" r="2.4" fill="#252528"/></svg>
<svg style="left:1537px;top:150px" width="13" height="13" viewBox="0 0 13 13"><rect x="0" y="0.5" width="2" height="1.6" fill="#e6e6e6"/><rect x="3.5" y="0.5" width="9.5" height="1.6" fill="#e6e6e6"/><rect x="0" y="3.9" width="2" height="1.6" fill="#e6e6e6"/><rect x="3.5" y="3.9" width="9.5" height="1.6" fill="#e6e6e6"/><rect x="0" y="7.3" width="2" height="1.6" fill="#e6e6e6"/><rect x="3.5" y="7.3" width="9.5" height="1.6" fill="#e6e6e6"/><rect x="0" y="10.7" width="2" height="1.6" fill="#e6e6e6"/><rect x="3.5" y="10.7" width="9.5" height="1.6" fill="#e6e6e6"/></svg>
<div class="box1" style="left:886px;top:180px;width:665px;height:405px"></div>
<div class="t" style="left:897px;top:198.0px;font-size:13px;color:#e0e0e0;">Width</div>
<div class="dd" style="left:980px;top:191px;width:111px;height:25px"><div class="v" style="top:7.5px">Bust</div><div class="ar" style="top:10.0px"></div></div>
<div class="spin" style="left:1094px;top:192px;width:100px;height:22px"><div class="v" style="top:5.3px">80.64 cm</div><svg style="left:89px;top:3.5px" width="6" height="15" viewBox="0 0 6 15"><path d="M3 0 L5.8 4.6 H0.2Z M3 15 L5.8 10.4 H0.2Z" fill="#ececec"/></svg></div>
<svg style="left:1203px;top:196px" width="8" height="15" viewBox="0 0 8 15"><rect x="1.5" y="0.8" width="5" height="6.5" rx="2.5" fill="none" stroke="#e0e0e0" stroke-width="1.5"/><rect x="1.5" y="7.7" width="5" height="6.5" rx="2.5" fill="none" stroke="#e0e0e0" stroke-width="1.5"/></svg>
<div class="t" style="left:1222px;top:198.0px;font-size:13px;color:#e0e0e0;">Height</div>
<div class="dd" style="left:1305px;top:191px;width:111px;height:25px"><div class="v" style="top:7.5px">Total Height</div><div class="ar" style="top:10.0px"></div></div>
<div class="spin" style="left:1419px;top:192px;width:100px;height:22px"><div class="v" style="top:5.3px">175.26 cm</div><svg style="left:89px;top:3.5px" width="6" height="15" viewBox="0 0 6 15"><path d="M3 0 L5.8 4.6 H0.2Z M3 15 L5.8 10.4 H0.2Z" fill="#ececec"/></svg></div>
<svg style="left:1528px;top:196px" width="8" height="15" viewBox="0 0 8 15"><rect x="1.5" y="0.8" width="5" height="6.5" rx="2.5" fill="none" stroke="#e0e0e0" stroke-width="1.5"/><rect x="1.5" y="7.7" width="5" height="6.5" rx="2.5" fill="none" stroke="#e0e0e0" stroke-width="1.5"/></svg>
<div class="box2" style="left:898px;top:225px;width:317px;height:348px"></div>
<div class="t" style="left:908px;top:238.0px;font-size:13px;color:#e0e0e0;">Circumference</div>
<div class="box3" style="left:909px;top:259px;width:294px;height:304px"></div>
<div class="t" style="left:919px;top:271.0px;font-size:13px;color:#e0e0e0;">Neck Base</div>
<div class="spin" style="left:1118px;top:266px;width:75px;height:22px"><div class="v" style="top:5.3px">35.56</div><svg style="left:64px;top:3.5px" width="6" height="15" viewBox="0 0 6 15"><path d="M3 0 L5.8 4.6 H0.2Z M3 15 L5.8 10.4 H0.2Z" fill="#ececec"/></svg></div>
<div class="t" style="left:919px;top:297.0px;font-size:13px;color:#e0e0e0;">Bicep</div>
<div class="spin" style="left:1118px;top:292px;width:75px;height:22px"><div class="v" style="top:5.3px">25.40</div><svg style="left:64px;top:3.5px" width="6" height="15" viewBox="0 0 6 15"><path d="M3 0 L5.8 4.6 H0.2Z M3 15 L5.8 10.4 H0.2Z" fill="#ececec"/></svg></div>
<div class="t" style="left:919px;top:323.0px;font-size:13px;color:#e0e0e0;">Waist</div>
<div class="spin" style="left:1118px;top:318px;width:75px;height:22px"><div class="v" style="top:5.3px">60.96</div><svg style="left:64px;top:3.5px" width="6" height="15" viewBox="0 0 6 15"><path d="M3 0 L5.8 4.6 H0.2Z M3 15 L5.8 10.4 H0.2Z" fill="#ececec"/></svg></div>
<div class="t" style="left:919px;top:349.0px;font-size:13px;color:#e0e0e0;">High Hip</div>
<div class="spin" style="left:1118px;top:344px;width:75px;height:22px"><div class="v" style="top:5.3px">80.33</div><svg style="left:64px;top:3.5px" width="6" height="15" viewBox="0 0 6 15"><path d="M3 0 L5.8 4.6 H0.2Z M3 15 L5.8 10.4 H0.2Z" fill="#ececec"/></svg></div>
<div class="t" style="left:919px;top:375.0px;font-size:13px;color:#e0e0e0;">Low Hip</div>
<div class="spin" style="left:1118px;top:370px;width:75px;height:22px"><div class="v" style="top:5.3px">95.57</div><svg style="left:64px;top:3.5px" width="6" height="15" viewBox="0 0 6 15"><path d="M3 0 L5.8 4.6 H0.2Z M3 15 L5.8 10.4 H0.2Z" fill="#ececec"/></svg></div>
<div class="t" style="left:919px;top:401.0px;font-size:13px;color:#e0e0e0;">Thigh</div>
<div class="spin" style="left:1118px;top:396px;width:75px;height:22px"><div class="v" style="top:5.3px">54.93</div><svg style="left:64px;top:3.5px" width="6" height="15" viewBox="0 0 6 15"><path d="M3 0 L5.8 4.6 H0.2Z M3 15 L5.8 10.4 H0.2Z" fill="#ececec"/></svg></div>
<div class="box2" style="left:1224px;top:225px;width:317px;height:348px"></div>
<div class="t" style="left:1234px;top:238.0px;font-size:13px;color:#e0e0e0;">Height</div>
<div class="box3" style="left:1234px;top:259px;width:295px;height:119px"></div>
<div class="t" style="left:1245px;top:271.0px;font-size:13px;color:#e0e0e0;">Inseam</div>
<div class="spin" style="left:1444px;top:266px;width:75px;height:22px"><div class="v" style="top:5.3px">84.14</div><svg style="left:64px;top:3.5px" width="6" height="15" viewBox="0 0 6 15"><path d="M3 0 L5.8 4.6 H0.2Z M3 15 L5.8 10.4 H0.2Z" fill="#ececec"/></svg></div>
<div class="t" style="left:1234px;top:388.4px;font-size:12.5px;color:#e0e0e0;"><span class="k">길이</span></div>
<div class="box3" style="left:1234px;top:409px;width:295px;height:154px"></div>
<div class="t" style="left:1245px;top:421.0px;font-size:13px;color:#e0e0e0;">Across Shoulder (Curvilinear)</div>
<div class="spin" style="left:1444px;top:416px;width:75px;height:22px"><div class="v" style="top:5.3px">37.78</div><svg style="left:64px;top:3.5px" width="6" height="15" viewBox="0 0 6 15"><path d="M3 0 L5.8 4.6 H0.2Z M3 15 L5.8 10.4 H0.2Z" fill="#ececec"/></svg></div>
<div class="t" style="left:1245px;top:447.0px;font-size:13px;color:#e0e0e0;">CB Neck to Wrist</div>
<div class="spin" style="left:1444px;top:442px;width:75px;height:22px"><div class="v" style="top:5.3px">77.79</div><svg style="left:64px;top:3.5px" width="6" height="15" viewBox="0 0 6 15"><path d="M3 0 L5.8 4.6 H0.2Z M3 15 L5.8 10.4 H0.2Z" fill="#ececec"/></svg></div>
<div class="t" style="left:1245px;top:473.0px;font-size:13px;color:#e0e0e0;">CF Neck to Waist</div>
<div class="spin" style="left:1444px;top:468px;width:75px;height:22px"><div class="v" style="top:5.3px">33.97</div><svg style="left:64px;top:3.5px" width="6" height="15" viewBox="0 0 6 15"><path d="M3 0 L5.8 4.6 H0.2Z M3 15 L5.8 10.4 H0.2Z" fill="#ececec"/></svg></div>
<div class="t" style="left:1245px;top:499.0px;font-size:13px;color:#e0e0e0;">CB Neck to Waist</div>
<div class="spin" style="left:1444px;top:494px;width:75px;height:22px"><div class="v" style="top:5.3px">38.10</div><svg style="left:64px;top:3.5px" width="6" height="15" viewBox="0 0 6 15"><path d="M3 0 L5.8 4.6 H0.2Z M3 15 L5.8 10.4 H0.2Z" fill="#ececec"/></svg></div>
<div class="t" style="left:1245px;top:525.0px;font-size:13px;color:#e0e0e0;">Total Rise</div>
<div class="spin" style="left:1444px;top:520px;width:75px;height:22px"><div class="v" style="top:5.3px">72.39</div><svg style="left:64px;top:3.5px" width="6" height="15" viewBox="0 0 6 15"><path d="M3 0 L5.8 4.6 H0.2Z M3 15 L5.8 10.4 H0.2Z" fill="#ececec"/></svg></div>
<div class="a" style="left:886px;top:601px;width:3px;height:12px;background:#e8e8e8;"></div>
<div class="t" style="left:897px;top:601.0px;font-size:13px;color:#e6e6e6;">Shape</div>
<div class="box1" style="left:886px;top:628px;width:665px;height:334px"></div>
<div class="box2" style="left:898px;top:640px;width:317px;height:107px"></div>
<div class="t" style="left:908px;top:653.0px;font-size:13px;color:#e0e0e0;">Hand &amp; Head</div>
<div class="box3" style="left:909px;top:671px;width:297px;height:66px"></div>
<div class="t" style="left:919px;top:685.0px;font-size:13px;color:#e0e0e0;">Hand</div>
<div class="sl" style="left:1021px;top:687px;width:95px"><div class="f" style="width:31px"></div><div class="kn" style="left:31px"></div></div>
<div class="spin" style="left:1122px;top:680px;width:75px;height:22px"><div class="v" style="top:5.3px">16.10</div><svg style="left:64px;top:3.5px" width="6" height="15" viewBox="0 0 6 15"><path d="M3 0 L5.8 4.6 H0.2Z M3 15 L5.8 10.4 H0.2Z" fill="#ececec"/></svg></div>
<div class="t" style="left:919px;top:713.0px;font-size:13px;color:#e0e0e0;">Head</div>
<div class="sl" style="left:1021px;top:715px;width:95px"><div class="f" style="width:32px"></div><div class="kn" style="left:32px"></div></div>
<div class="spin" style="left:1122px;top:708px;width:75px;height:22px"><div class="v" style="top:5.3px">54.50</div><svg style="left:64px;top:3.5px" width="6" height="15" viewBox="0 0 6 15"><path d="M3 0 L5.8 4.6 H0.2Z M3 15 L5.8 10.4 H0.2Z" fill="#ececec"/></svg></div>
<div class="box2" style="left:1224px;top:640px;width:317px;height:107px"></div>
<div class="t" style="left:1234px;top:652.0px;font-size:13px;color:#e0e0e0;">Crotch</div>
<div class="box3" style="left:1234px;top:671px;width:299px;height:66px"></div>
<div class="t" style="left:1245px;top:699.0px;font-size:13px;color:#e0e0e0;">Width</div>
<div class="sl" style="left:1351px;top:701px;width:91px"><div class="f" style="width:30px"></div><div class="kn" style="left:30px"></div></div>
<div class="spin" style="left:1448px;top:694px;width:75px;height:22px"><div class="v" style="top:5.3px">30%</div><svg style="left:64px;top:3.5px" width="6" height="15" viewBox="0 0 6 15"><path d="M3 0 L5.8 4.6 H0.2Z M3 15 L5.8 10.4 H0.2Z" fill="#ececec"/></svg></div>
<div class="box2" style="left:898px;top:757px;width:317px;height:194px"></div>
<div class="t" style="left:908px;top:771.0px;font-size:13px;color:#e0e0e0;">Hip</div>
<svg style="left:1189px;top:771px" width="12" height="11" viewBox="0 0 12 11"><path d="M4.5 1 L1.3 4 L4.5 7 M1.6 4 H7.5 A3.3 3.3 0 0 1 7.5 10.5 H5.5" fill="none" stroke="#e0e0e0" stroke-width="1.4"/></svg>
<div class="box3" style="left:909px;top:791px;width:297px;height:150px"></div>
<div class="t" style="left:920px;top:826.0px;font-size:13px;color:#e0e0e0;">Dips</div>
<div class="sl" style="left:1021px;top:829px;width:90px"><div class="f" style="width:45px"></div><div class="kn" style="left:45px"></div></div>
<div class="spin" style="left:1121px;top:820px;width:75px;height:22px"><div class="v" style="top:5.3px">50%</div><svg style="left:64px;top:3.5px" width="6" height="15" viewBox="0 0 6 15"><path d="M3 0 L5.8 4.6 H0.2Z M3 15 L5.8 10.4 H0.2Z" fill="#ececec"/></svg></div>
<div class="t" style="left:920px;top:897.0px;font-size:13px;color:#e0e0e0;">Volume</div>
<div class="sl" style="left:1021px;top:889px;width:90px"><div class="f" style="width:45px"></div><div class="kn" style="left:45px"></div></div>
<div class="spin" style="left:1121px;top:891px;width:75px;height:22px"><div class="v" style="top:5.3px">50%</div><svg style="left:64px;top:3.5px" width="6" height="15" viewBox="0 0 6 15"><path d="M3 0 L5.8 4.6 H0.2Z M3 15 L5.8 10.4 H0.2Z" fill="#ececec"/></svg></div>
<div class="t" style="left:1021px;top:906.7px;font-size:11px;color:#d8d8d8;">Flat</div>
<div class="t" style="left:1078px;top:906.7px;font-size:11px;color:#d8d8d8;">Curved</div>
<div class="box2" style="left:1224px;top:757px;width:317px;height:194px"></div>
<div class="t" style="left:1234px;top:771.0px;font-size:13px;color:#e0e0e0;">Breast</div>
<svg style="left:1515px;top:771px" width="12" height="11" viewBox="0 0 12 11"><path d="M4.5 1 L1.3 4 L4.5 7 M1.6 4 H7.5 A3.3 3.3 0 0 1 7.5 10.5 H5.5" fill="none" stroke="#e0e0e0" stroke-width="1.4"/></svg>
<div class="box3" style="left:1234px;top:791px;width:299px;height:150px"></div>
<div class="t" style="left:1246px;top:814.0px;font-size:13px;color:#e0e0e0;">Shape</div>
<div class="sl" style="left:1347px;top:809px;width:90px"><div class="f" style="width:45px"></div><div class="kn" style="left:45px"></div></div>
<div class="spin" style="left:1446px;top:809px;width:75px;height:22px"><div class="v" style="top:5.3px">50%</div><svg style="left:64px;top:3.5px" width="6" height="15" viewBox="0 0 6 15"><path d="M3 0 L5.8 4.6 H0.2Z M3 15 L5.8 10.4 H0.2Z" fill="#ececec"/></svg></div>
<div class="t" style="left:1347px;top:824.7px;font-size:11px;color:#d8d8d8;">Ball</div>
<div class="t" style="left:1394px;top:824.7px;font-size:11px;color:#d8d8d8;">Teardrop</div>
<div class="t" style="left:1246px;top:861.0px;font-size:13px;color:#e0e0e0;">Space</div>
<div class="sl" style="left:1347px;top:856px;width:90px"><div class="f" style="width:45px"></div><div class="kn" style="left:45px"></div></div>
<div class="spin" style="left:1446px;top:856px;width:75px;height:22px"><div class="v" style="top:5.3px">50%</div><svg style="left:64px;top:3.5px" width="6" height="15" viewBox="0 0 6 15"><path d="M3 0 L5.8 4.6 H0.2Z M3 15 L5.8 10.4 H0.2Z" fill="#ececec"/></svg></div>
<div class="t" style="left:1347px;top:871.7px;font-size:11px;color:#d8d8d8;">Narrow</div>
<div class="t" style="left:1412px;top:871.7px;font-size:11px;color:#d8d8d8;">Wide</div>
<div class="t" style="left:1246px;top:908.0px;font-size:13px;color:#e0e0e0;">Height</div>
<div class="sl" style="left:1347px;top:903px;width:90px"><div class="f" style="width:61px"></div><div class="kn" style="left:61px"></div></div>
<div class="spin" style="left:1446px;top:903px;width:75px;height:22px"><div class="v" style="top:5.3px">70%</div><svg style="left:64px;top:3.5px" width="6" height="15" viewBox="0 0 6 15"><path d="M3 0 L5.8 4.6 H0.2Z M3 15 L5.8 10.4 H0.2Z" fill="#ececec"/></svg></div>
<div class="t" style="left:1347px;top:918.7px;font-size:11px;color:#d8d8d8;"><span class="k">낮음</span></div>
<div class="t" style="left:1418px;top:918.7px;font-size:11px;color:#d8d8d8;"><span class="k">높음</span></div>
<div class="a" style="left:869px;top:976px;width:700px;height:1px;background:#9a9a9d;"></div>
<div class="a" style="left:869px;top:977px;width:700px;height:28px;background:#17171a;"></div>
<div class="a" style="left:869px;top:977px;width:45px;height:27px;background:#1b1b1e;"></div>
<div class="a" style="left:869px;top:1004px;width:45px;height:2px;background:#38383b;"></div>
<div class="t" style="left:877px;top:986.4px;font-size:12.5px;color:#e6e6e6;">2D <span class="k">창</span></div>
<div class="a" style="left:914px;top:977px;width:84px;height:27px;background:#0c0c0e;"></div>
<div class="t" style="left:922px;top:986.4px;font-size:12.5px;color:#66b2f5;"><span class="k">아바타 편집창</span></div>
<div class="a" style="left:914px;top:1004px;width:84px;height:2px;background:#6ab8f7;"></div>
<div class="a" style="left:1574px;top:43px;width:340px;height:21px;background:#1e1e21;"></div>
<svg style="left:1577px;top:48px" width="12" height="11" viewBox="0 0 12 11"><path d="M1 5.5 H9 M5.5 1.5 L9.5 5.5 L5.5 9.5" fill="none" stroke="#f0f0f0" stroke-width="1.8"/></svg>
<div class="a" style="left:1588px;top:47px;width:1px;height:13px;background:#3a3a3d;"></div>
<div class="t" style="left:1543px;width:400px;text-align:center;top:47.0px;font-size:13px;color:#e4e4e4;"><span class="k">물체창</span></div>
<svg style="left:1899px;top:47px" width="13" height="12" viewBox="0 0 13 12"><rect x="4" y="1" width="8" height="6" rx="1.5" fill="none" stroke="#cfcfcf" stroke-width="1.3"/><path d="M4 3.5 H2.5 Q1 3.5 1 5 V9.5 Q1 11 2.5 11 H7.5 Q9 11 9 9.5 V8" fill="none" stroke="#cfcfcf" stroke-width="1.3"/></svg>
<div class="a" style="left:1574px;top:64px;width:340px;height:408px;background:#252528;"></div>
<div class="a" style="left:1574px;top:64px;width:340px;height:29px;background:#1f1f22;"></div>
<div class="a" style="left:1574px;top:91px;width:309px;height:2px;background:#38383b;"></div>
<div class="a" style="left:1574px;top:91px;width:34px;height:2px;background:#6ab8f7;"></div>
<div class="a" style="left:1883px;top:64px;width:31px;height:29px;background:#242427;"></div>
<svg style="left:1584px;top:67px" width="17" height="16" viewBox="0 0 17 16"><path d="M4 2 Q10 0 16 2 L14 13 Q8 11 2 13Z" fill="#5aa6f0"/><path d="M2 13 Q8 11 14 13 L13 15 Q7 13.5 1.5 15Z" fill="#2a6cc0"/></svg>
<svg style="left:1616px;top:67px" width="16" height="16" viewBox="0 0 16 16"><rect x="0.5" y="0.5" width="15" height="15" fill="#f2f2f2"/><rect x="1.5" y="1.5" width="3.3" height="3.3" fill="#111"/><rect x="8.1" y="1.5" width="3.3" height="3.3" fill="#111"/><rect x="4.8" y="4.8" width="3.3" height="3.3" fill="#111"/><rect x="11.399999999999999" y="4.8" width="3.3" height="3.3" fill="#111"/><rect x="1.5" y="8.1" width="3.3" height="3.3" fill="#111"/><rect x="8.1" y="8.1" width="3.3" height="3.3" fill="#111"/><rect x="4.8" y="11.399999999999999" width="3.3" height="3.3" fill="#111"/><rect x="11.399999999999999" y="11.399999999999999" width="3.3" height="3.3" fill="#111"/></svg>
<svg style="left:1648px;top:67px" width="16" height="16" viewBox="0 0 16 16"><circle cx="8" cy="8" r="7.5" fill="#f0f0f0"/><circle cx="5.5" cy="5.5" r="1.4" fill="#222"/><circle cx="10.5" cy="5.5" r="1.4" fill="#222"/><circle cx="5.5" cy="10.5" r="1.4" fill="#222"/><circle cx="10.5" cy="10.5" r="1.4" fill="#222"/></svg>
<svg style="left:1680px;top:71px" width="16" height="8" viewBox="0 0 16 8"><circle cx="3" cy="4" r="2.6" fill="#f0f0f0"/><path d="M3 4 H16" stroke="#f0f0f0" stroke-width="2"/></svg>
<svg style="left:1712px;top:67px" width="16" height="16" viewBox="0 0 16 16"><path d="M1 15 L15 1" stroke="#f0f0f0" stroke-width="2" stroke-dasharray="3 2.2"/></svg>
<svg style="left:1743px;top:66px" width="18" height="17" viewBox="0 0 18 17"><path d="M2 16 Q1 11 4 9 Q6 14 8 10 Q7 6 10 5 Q12 10 14 6 Q13 2 16 3" fill="none" stroke="#f0f0f0" stroke-width="1.7"/></svg>
<svg style="left:1775px;top:67px" width="17" height="16" viewBox="0 0 17 16"><path d="M1 1 L8 5 L15 1 V10 L8 7 L1 10Z" fill="#f0f0f0"/><rect x="6.5" y="3.5" width="3" height="4" fill="#252528"/><path d="M5 8 L3 15 L7 12Z M11 8 L13 15 L9 12Z" fill="#f0f0f0"/></svg>
<svg style="left:1809px;top:66px" width="12" height="18" viewBox="0 0 12 18"><rect x="1" y="1" width="10" height="16" rx="4" fill="#f0f0f0"/><rect x="4" y="3" width="4" height="6" rx="1" fill="#252528"/><rect x="3.5" y="11" width="5" height="4" rx="1" fill="#252528"/></svg>
<svg style="left:1839px;top:67px" width="17" height="17" viewBox="0 0 17 17"><path d="M1 6 L6 4 V16 H1Z" fill="#f0f0f0"/><path d="M7 4 L11 2 V16 H7Z" fill="#f0f0f0"/><path d="M12 1 Q16 5 13 9 Q16 13 14 16" fill="none" stroke="#f0f0f0" stroke-width="1.5"/></svg>
<svg style="left:1871px;top:71px" width="12" height="8" viewBox="0 0 12 8"><path d="M0 0 H12 V8 H0Z" fill="#f0f0f0"/><rect x="2.0" y="0" width="1" height="4.5" fill="#242427"/><rect x="4.2" y="0" width="1" height="4.5" fill="#242427"/><rect x="6.4" y="0" width="1" height="4.5" fill="#242427"/><rect x="8.600000000000001" y="0" width="1" height="4.5" fill="#242427"/></svg>
<div class="a" style="left:1889px;top:74px;width:0;height:0;border-top:4px solid transparent;border-bottom:4px solid transparent;border-right:5px solid #e0e0e0"></div>
<div class="a" style="left:1904px;top:74px;width:0;height:0;border-top:4px solid transparent;border-bottom:4px solid transparent;border-left:5px solid #e0e0e0"></div>
<svg style="left:1585px;top:113px" width="16" height="16" viewBox="0 0 16 16"><defs><linearGradient id="trg" x1="0" y1="0" x2="0" y2="1"><stop offset="0" stop-color="#22d69a"/><stop offset="1" stop-color="#2a8ff0"/></linearGradient></defs><path d="M8 8.5 C5.5 6 6 1.2 8 1.2 C10 1.2 10.5 6 8 8.5 M8 8.5 C4.5 7.5 1 9.5 1.5 12.5 C2 15 6.5 14.5 8 11 C9.5 14.5 14 15 14.5 12.5 C15 9.5 11.5 7.5 8 8.5" fill="none" stroke="url(#trg)" stroke-width="1.6"/></svg>
<svg style="left:1817px;top:115px" width="16" height="14" viewBox="0 0 16 14"><path d="M1 2 H5 L6.5 3.5 H11 V12 H1Z" fill="#e0e0e0"/><path d="M12 1 V7 M9 4 H15" stroke="#e0e0e0" stroke-width="1.6"/></svg>
<div class="a" style="left:1836px;top:110px;width:1px;height:25px;background:#2c2c2f;"></div>
<svg style="left:1842px;top:115px" width="14" height="13" viewBox="0 0 14 13"><path d="M1 12 Q0 3 7 1 Q14 3 13 12 L10 12 Q10 6 7 5 Q4 6 4 12Z" fill="#c0c0c0"/><path d="M7 1 V12" stroke="#252528" stroke-width="1"/></svg>
<div class="t" style="left:1859px;top:117.0px;font-size:13px;color:#e0e0e0;">CLOFAB</div>
<div class="a" style="left:1584px;top:142px;width:330px;height:20px;background:#1d1d20;"></div>
<div class="a" style="left:1595px;top:149px;width:0;height:0;border-left:3.5px solid transparent;border-right:3.5px solid transparent;border-top:5px solid #e0e0e0"></div>
<div class="t" style="left:1703px;top:147.0px;font-size:13px;color:#e0e0e0;">Primary</div>
<svg style="left:1761px;top:146px" width="12" height="12" viewBox="0 0 12 12"><path d="M1 11 L1.5 8.5 L8.5 1.5 L10.5 3.5 L3.5 10.5Z" fill="#e6e6e6"/></svg>
<svg style="left:1856px;top:147px" width="12" height="12" viewBox="0 0 12 12"><path d="M6 0.5 V11.5 M0.5 6 H11.5" stroke="#f0f0f0" stroke-width="1.8"/></svg>
<svg style="left:1876px;top:146px" width="14" height="12" viewBox="0 0 14 12"><path d="M1 1 H5 L6.5 2.5 H13 V11 H1Z" fill="#f0f0f0"/><path d="M1 4.3 H13" stroke="#1d1d20" stroke-width="0.9"/></svg>
<svg style="left:1587px;top:177px" width="13" height="11" viewBox="0 0 13 11"><path d="M1.5 5.5 L5 9 L11.5 1.5" fill="none" stroke="#5eaaf2" stroke-width="2"/></svg>
<div class="a" style="left:1607px;top:166px;width:37px;height:37px;background:#ffffff;"></div>
<div class="t" style="left:1652px;top:179.0px;font-size:13px;color:#e4e4e4;"><span class="k">원단</span> 1</div>
<div class="a" style="left:1884px;top:183px;width:2px;height:2px;background:#e0e0e0;"></div>
<div class="a" style="left:1888px;top:183px;width:2px;height:2px;background:#e0e0e0;"></div>
<div class="a" style="left:1892px;top:183px;width:2px;height:2px;background:#e0e0e0;"></div>
<div class="a" style="left:1589px;top:205px;width:310px;height:1px;background:#303033;"></div>
<div class="a" style="left:1574px;top:472px;width:340px;height:5px;background:#17171a;"></div>
<div class="a" style="left:1574px;top:477px;width:340px;height:20px;background:#1e1e21;"></div>
<svg style="left:1577px;top:482px" width="12" height="11" viewBox="0 0 12 11"><path d="M1 5.5 H9 M5.5 1.5 L9.5 5.5 L5.5 9.5" fill="none" stroke="#f0f0f0" stroke-width="1.8"/></svg>
<div class="a" style="left:1588px;top:481px;width:1px;height:13px;background:#3a3a3d;"></div>
<div class="t" style="left:1543px;width:400px;text-align:center;top:481.0px;font-size:13px;color:#e4e4e4;"><span class="k">속성창</span></div>
<svg style="left:1899px;top:481px" width="13" height="12" viewBox="0 0 13 12"><rect x="4" y="1" width="8" height="6" rx="1.5" fill="none" stroke="#cfcfcf" stroke-width="1.3"/><path d="M4 3.5 H2.5 Q1 3.5 1 5 V9.5 Q1 11 2.5 11 H7.5 Q9 11 9 9.5 V8" fill="none" stroke="#cfcfcf" stroke-width="1.3"/></svg>
<div class="a" style="left:1574px;top:497px;width:340px;height:508px;background:#252528;"></div>
<div class="a" style="left:1914px;top:43px;width:6px;height:962px;background:#17171a;"></div>
<div class="a" style="left:0px;top:1005px;width:1920px;height:33px;background:#17171a;"></div>
<div class="t" style="left:16px;top:1016.7px;font-size:11px;color:#d6d6d6;">Version: 2025.2.236 (r57278)</div>
<svg style="left:1810px;top:1015px" width="15" height="13" viewBox="0 0 15 13"><rect x="0.7" y="0.7" width="13.6" height="11.6" fill="none" stroke="#bdbdbd" stroke-width="1.2"/><rect x="1.5" y="1.5" width="5.5" height="10" fill="#4a4a4d"/><rect x="8" y="1.5" width="5.5" height="10" fill="#4a4a4d"/><path d="M7.5 1 V12" stroke="#bdbdbd" stroke-width="1"/></svg>
<svg style="left:1834px;top:1015px" width="16" height="13" viewBox="0 0 16 13"><rect x="0" y="0" width="16" height="13" rx="1" fill="#e8e8e8"/><text x="8" y="10.5" font-family="Liberation Sans" font-weight="bold" font-size="9.5" text-anchor="middle" fill="#17171a">3D</text></svg>
<svg style="left:1858px;top:1015px" width="16" height="13" viewBox="0 0 16 13"><rect x="0" y="0" width="16" height="13" rx="1" fill="#e8e8e8"/><text x="8" y="10.5" font-family="Liberation Sans" font-weight="bold" font-size="9.5" text-anchor="middle" fill="#17171a">2D</text></svg>
<div class="a" style="left:1879px;top:1012px;width:1px;height:20px;background:#2a2a2d;"></div>
<svg style="left:1886px;top:1014px" width="14" height="14" viewBox="0 0 14 14"><path d="M11.5 4.5 A5.3 5.3 0 1 0 12.3 8" fill="none" stroke="#e0e0e0" stroke-width="1.7"/><path d="M12.8 1.2 V5.6 H8.4Z" fill="#e0e0e0"/></svg>
<div class="a" style="left:0;top:1039px;width:1920px;height:41px;background:linear-gradient(to right,#d8e6ef,#dde8f0 50%,#dae4ee)"></div>
<div class="a" style="left:1916px;top:1039px;width:4px;height:41px;background:#c9d3dc;"></div>
<svg style="left:16px;top:1052px" width="17" height="17" viewBox="0 0 17 17"><path d="M0 2.3 L7 1.3 V8 H0Z M8 1.1 L16.5 0 V8 H8Z M0 9 H7 V15.7 L0 14.7Z M8 9 H16.5 V17 L8 15.9Z" fill="#111"/></svg>
<svg style="left:61px;top:1049px" width="22" height="22" viewBox="0 0 22 22"><circle cx="13" cy="8.5" r="6.8" fill="none" stroke="#111" stroke-width="2"/><path d="M8.2 13.3 L1.5 20" stroke="#111" stroke-width="2.4" stroke-linecap="round"/></svg>
<svg style="left:111px;top:1051px" width="17" height="19" viewBox="0 0 17 19"><rect x="1.5" y="4.5" width="10" height="10" fill="none" stroke="#222" stroke-width="1.4"/><path d="M0 1.5 H13 M0 17.5 H13" stroke="#222" stroke-width="1.4"/><path d="M15.5 1 V5 M15.5 7 V12 M15.5 14 V18" stroke="#222" stroke-width="1.4"/></svg>
<svg style="left:159px;top:1048px" width="24" height="24" viewBox="0 0 24 24"><defs><linearGradient id="eg1" x1="0" y1="0" x2="1" y2="0.6"><stop offset="0" stop-color="#2fb4f0"/><stop offset="1" stop-color="#5bd868"/></linearGradient><linearGradient id="eg2" x1="0" y1="0" x2="0.6" y2="1"><stop offset="0" stop-color="#2a9ae8"/><stop offset="1" stop-color="#0b4c9c"/></linearGradient></defs><circle cx="12" cy="12" r="11.8" fill="url(#eg1)"/><path d="M0.3 13 Q0.5 5.5 8 5 Q14 4.8 15.2 10.5 Q12.5 8 9 9.5 Q5.5 12 7.5 16.5 Q10.5 21 17 20.5 Q20.5 20 22.5 17.5 Q19.5 23.8 12 23.8 Q1 23.5 0.3 13Z" fill="url(#eg2)"/><ellipse cx="11" cy="13.2" rx="3.6" ry="3.2" fill="#d9e6ee"/><path d="M14.5 14 Q17 16.5 22 16" stroke="#1e7fd0" stroke-width="1.2" fill="none" opacity="0.6"/></svg>
<div class="a" style="left:151px;top:1078px;width:40px;height:2px;background:#0a6bd3;"></div>
<svg style="left:207px;top:1048px" width="25" height="24" viewBox="0 0 25 24"><defs><linearGradient id="npg" x1="0" y1="0" x2="1" y2="1"><stop offset="0" stop-color="#d4f0f6"/><stop offset="0.5" stop-color="#8fd0e0"/><stop offset="1" stop-color="#5ab0c8"/></linearGradient></defs><path d="M9 2 L23 3.5 L22 20 L15 23 Z" fill="#c9a060"/><path d="M9 2 L22 3.5 L20.5 19.5 L14.5 22.5 Z" fill="#f4f4f4"/><path d="M8.5 1.5 L19.5 3 L14 22 L1 17.5Z" fill="url(#npg)"/><path d="M8.5 1.5 L19.5 3 L19 5 L8 3.5Z" fill="#888"/></svg>
<svg style="left:256px;top:1049px" width="25" height="22" viewBox="0 0 25 22"><path d="M1 2 H10 L12 4.5 H24 V21 H1Z" fill="#f3b73a"/><path d="M1 7 H24 V21 H1Z" fill="#fdd45c"/><rect x="7" y="13" width="11" height="8" fill="#2a7ad6"/><rect x="10" y="16" width="5" height="5" fill="#fdd45c"/></svg>
<div class="a" style="left:249px;top:1078px;width:40px;height:2px;background:#0a6bd3;"></div>
<svg style="left:309px;top:1048px" width="19" height="24" viewBox="0 0 19 24"><rect x="0" y="0" width="19" height="24" rx="2" fill="#3a3f44"/><rect x="2.5" y="2.5" width="14" height="4" fill="#e8eef0"/><rect x="2.5" y="9.0" width="3" height="2.6" fill="#e8eef0"/><rect x="7.3" y="9.0" width="3" height="2.6" fill="#e8eef0"/><rect x="12.1" y="9.0" width="3" height="2.6" fill="#e8eef0"/><rect x="2.5" y="13.6" width="3" height="2.6" fill="#e8eef0"/><rect x="7.3" y="13.6" width="3" height="2.6" fill="#e8eef0"/><rect x="12.1" y="13.6" width="3" height="2.6" fill="#e8eef0"/><rect x="2.5" y="18.2" width="3" height="2.6" fill="#e8eef0"/><rect x="7.3" y="18.2" width="3" height="2.6" fill="#e8eef0"/><rect x="12.1" y="18.2" width="3" height="2.6" fill="#e8eef0"/></svg>
<div class="a" style="left:343px;top:1039px;width:48px;height:41px;background:#e9f0f5;"></div>
<svg style="left:355px;top:1048px" width="23" height="24" viewBox="0 0 23 24"><defs><linearGradient id="cg" x1="0" y1="0" x2="1" y2="1"><stop offset="0" stop-color="#3ab4ff"/><stop offset="1" stop-color="#1475e0"/></linearGradient></defs><path d="M11.5 0.5 L22 6.5 V17.5 L11.5 23.5 L1 17.5 V6.5Z" fill="url(#cg)"/><path d="M16.5 8.5 A6 6 0 1 0 16.5 15.5" fill="none" stroke="#ffffff" stroke-width="2.6" stroke-dasharray="4.2 1.2"/></svg>
<div class="a" style="left:343px;top:1078px;width:48px;height:2px;background:#0a6bd3;"></div>
<svg style="left:403px;top:1047px" width="25" height="25" viewBox="0 0 25 25"><circle cx="12.5" cy="12.5" r="12" fill="#db4437"/><path d="M12.5 12.5 L2.1 6.5 A12 12 0 0 0 12.5 24.5Z" fill="#0f9d58"/><path d="M12.5 12.5 L12.5 24.5 A12 12 0 0 0 22.9 6.5Z" fill="#f4b400"/><path d="M12.5 12.5 L22.9 6.5 H12.5Z" fill="#db4437"/><circle cx="12.5" cy="12.5" r="5.6" fill="#fff"/><circle cx="12.5" cy="12.5" r="4.4" fill="#4285f4"/></svg>
<div class="a" style="left:396px;top:1078px;width:40px;height:2px;background:#0a6bd3;"></div>
<svg style="left:1648px;top:1050px" width="17" height="19" viewBox="0 0 17 19"><path d="M8 1 L15 3.5 V9 Q15 15 8 18 Q1 15 1 9 V3.5Z" fill="#fff" stroke="#222" stroke-width="1.3"/><path d="M8 1 V18 M1 9 H15" stroke="#222" stroke-width="1.2"/><circle cx="12" cy="14" r="4" fill="#16a34a"/><path d="M10 14 L11.5 15.5 L14 12.8" fill="none" stroke="#fff" stroke-width="1.2"/></svg>
<svg style="left:1675px;top:1052px" width="15" height="15" viewBox="0 0 15 15"><path d="M1 12 A11 11 0 0 1 12 1 M4 12 A8 8 0 0 1 12 4 M7 12 A5 5 0 0 1 12 7" fill="none" stroke="#222" stroke-width="1.4" transform="translate(1 1)"/><circle cx="13" cy="13.5" r="1.4" fill="#222"/></svg>
<div class="a" style="left:1697px;top:1052px;width:16px;height:16px;background:#1b1b1b;"></div>
<svg style="left:1699px;top:1055px" width="12" height="10" viewBox="0 0 12 10"><ellipse cx="6" cy="5" rx="5" ry="3.6" fill="none" stroke="#76b900" stroke-width="1.4"/><circle cx="6.5" cy="5" r="1.6" fill="#76b900"/></svg>
<svg style="left:1720px;top:1051px" width="17" height="17" viewBox="0 0 17 17"><path d="M1 6 H4 L8 2 V15 L4 11 H1Z" fill="none" stroke="#222" stroke-width="1.3"/><path d="M10.5 6 L15 11 M15 6 L10.5 11" stroke="#222" stroke-width="1.3"/></svg>
<svg style="left:1743px;top:1050px" width="18" height="18" viewBox="0 0 18 18"><path d="M3 4 Q10 0 15 8 Q12 13 7 15 Q4 11 3 4Z" fill="#333"/><circle cx="5" cy="13" r="3" fill="#888"/></svg>
<svg style="left:1768px;top:1051px" width="17" height="17" viewBox="0 0 17 17"><circle cx="8.5" cy="8.5" r="7.5" fill="none" stroke="#aaa" stroke-width="1.3"/><path d="M5.5 5.5 L11.5 11.5 M11.5 5.5 L5.5 11.5" stroke="#aaa" stroke-width="1.6"/></svg>
<div class="t" style="left:1801px;top:1044.8px;font-size:12px;color:#222;"><span class="k">오후</span> 1:39</div>
<div class="t" style="left:1794px;top:1062.8px;font-size:12px;color:#222;">2025-12-19</div>
<svg style="left:1878px;top:1051px" width="18" height="18" viewBox="0 0 18 18"><path d="M1 1 H17 V13 H9 L6 16.5 V13 H1Z" fill="none" stroke="#222" stroke-width="1.3"/></svg>
<div class="a" style="left:404px;top:75px;width:32px;height:65px;background:#3c3c3f;border-radius:9px"></div>
<div class="a" style="left:404px;top:147px;width:32px;height:96px;background:#3c3c3f;border-radius:9px"></div>
<div class="a" style="left:404px;top:249px;width:32px;height:126px;background:#3c3c3f;border-radius:9px"></div>
<svg style="left:410px;top:84px" width="20" height="18" viewBox="0 0 20 18"><path d="M2 6 L10 2 L18 6 V13 L10 17 L2 13Z" fill="#b8b8bc"/><path d="M2 6 L10 10 L18 6 L10 2Z" fill="#dedee2"/><path d="M10 10 V17 L18 13 V6Z" fill="#8a8a8e"/><circle cx="2.5" cy="15.5" r="2.2" fill="#c8c8cc"/></svg>
<svg style="left:410px;top:114px" width="20" height="18" viewBox="0 0 20 18"><path d="M3 3 L7 1 Q10 3 13 1 L17 3 L20 8 L16 10 V18 H4 V10 L0 8Z" fill="#9a9a9e" transform="scale(0.85) translate(2,1)"/><circle cx="2.5" cy="16" r="2" fill="#c8c8cc"/></svg>
<svg style="left:410px;top:156px" width="20" height="18" viewBox="0 0 20 18"><path d="M3 3 L7 1 Q10 3 13 1 L17 3 L20 8 L16 10 V18 H4 V10 L0 8Z" fill="#6c6c70" transform="scale(0.9) translate(1,1)"/></svg>
<svg style="left:410px;top:186px" width="20" height="18" viewBox="0 0 20 18"><circle cx="5" cy="9" r="4" fill="#646468"/><path d="M9 14 L12 8 L16 10 L18 17 H10Z" fill="#5e5e62"/><path d="M8 7 L16 2" stroke="#666" stroke-width="1"/></svg>
<svg style="left:411px;top:215px" width="18" height="19" viewBox="0 0 18 19"><circle cx="9" cy="5.5" r="4.5" fill="#f4f4f4"/><path d="M1 18 Q1 11 9 10.5 Q17 11 17 18Z" fill="#f4f4f4"/></svg>
<svg style="left:410px;top:256px" width="20" height="19" viewBox="0 0 20 19"><path d="M4 4 Q11 1 18 2 L16 14 Q9 13 3 16Z" fill="#2f7fd0"/><path d="M3 16 L4 4 L2 6 L1 15Z" fill="#1d4e86"/><path d="M3 16 Q9 13 16 14 L15 17 Q8 16 3 18Z" fill="#555"/></svg>
<svg style="left:410px;top:287px" width="20" height="19" viewBox="0 0 20 19"><path d="M4 4 Q11 1 18 2 L16 14 Q9 13 3 16Z" fill="#333336"/><path d="M3 16 Q9 13 16 14 L15 17 Q8 16 3 18Z" fill="#2a2a2c"/></svg>
<svg style="left:411px;top:318px" width="18" height="19" viewBox="0 0 18 19"><ellipse cx="9" cy="7" rx="5" ry="6" fill="#f2c9a4"/><path d="M1 18 Q2 12 9 12 Q16 12 17 18Z" fill="#f2c9a4"/></svg>
<svg style="left:411px;top:348px" width="18" height="18" viewBox="0 0 18 18"><circle cx="9" cy="9" r="8" fill="none" stroke="#eee" stroke-width="1.3"/><ellipse cx="9" cy="9" rx="3.5" ry="8" fill="none" stroke="#eee" stroke-width="1.1"/><path d="M1 9 H17 M2.5 5 H15.5 M2.5 13 H15.5 M9 1 V17" stroke="#eee" stroke-width="1.1"/></svg>
<svg style="left:327px;top:84px" width="18" height="18" viewBox="0 0 18 18"><defs><linearGradient id="da" x1="0" y1="0" x2="0" y2="1"><stop offset="0" stop-color="#555"/><stop offset="0.5" stop-color="#bbb"/><stop offset="1" stop-color="#ddd"/></linearGradient></defs><path d="M6 1 H12 V9 H17 L9 17 L1 9 H6Z" fill="url(#da)"/></svg>
<div class="a" style="left:342px;top:96px;width:0;height:0;border-bottom:7px solid #c8c8cc;border-left:7px solid transparent"></div>
<div class="a" style="left:322px;top:134px;width:0;height:0;border-top:3.5px solid transparent;border-bottom:3.5px solid transparent;border-left:6px solid #8c8c90"></div>
<svg style="left:328px;top:134px" width="18" height="18" viewBox="0 0 18 18"><path d="M9 1 V17 M1 9 H17" stroke="#e8e8e8" stroke-width="1.4"/><path d="M9 0 L6.5 3 H11.5Z M9 18 L6.5 15 H11.5Z M0 9 L3 6.5 V11.5Z M18 9 L15 6.5 V11.5Z" fill="#e8e8e8"/></svg>
<div class="a" style="left:322px;top:161px;width:0;height:0;border-top:3.5px solid transparent;border-bottom:3.5px solid transparent;border-left:6px solid #8c8c90"></div>
<svg style="left:327px;top:161px" width="20" height="18" viewBox="0 0 20 18"><circle cx="8" cy="9" r="6" fill="none" stroke="#ccc" stroke-width="1.3" stroke-dasharray="1.6 1.4"/><path d="M8 15 L17 3 L19 5 L10 16Z" fill="#e0e0e0"/></svg>
<div class="a" style="left:342px;top:175px;width:0;height:0;border-bottom:7px solid #c8c8cc;border-left:7px solid transparent"></div>
<div class="a" style="left:322px;top:210px;width:0;height:0;border-top:3.5px solid transparent;border-bottom:3.5px solid transparent;border-left:6px solid #8c8c90"></div>
<svg style="left:326px;top:210px" width="21" height="19" viewBox="0 0 21 19"><g transform="scale(1.0)"><path d="M3 3 L7 1 Q10 3 13 1 L17 3 L20 8 L16 10 V18 H4 V10 L0 8Z" fill="#c4c4c8"/></g></svg>
<div class="a" style="left:342px;top:225px;width:0;height:0;border-bottom:7px solid #c8c8cc;border-left:7px solid transparent"></div>
<div class="a" style="left:322px;top:255px;width:0;height:0;border-top:3.5px solid transparent;border-bottom:3.5px solid transparent;border-left:6px solid #8c8c90"></div>
<svg style="left:328px;top:257px" width="18" height="16" viewBox="0 0 18 16"><path d="M2 3 H14 V10 H11 V6 H5 V10 H2Z" fill="#9a9a9e"/><rect x="1" y="13" width="16" height="2" fill="#9a9a9e"/></svg>
<svg style="left:328px;top:291px" width="18" height="16" viewBox="0 0 18 16"><path d="M2 2 H14 V9 H11 V5 H5 V9 H2Z" fill="#9a9a9e"/><path d="M2 13 H16" stroke="#ccc" stroke-width="1.3"/><circle cx="2" cy="13" r="1.6" fill="#ddd"/><circle cx="16" cy="13" r="1.6" fill="#ddd"/></svg>
<div class="a" style="left:342px;top:306px;width:0;height:0;border-bottom:7px solid #c8c8cc;border-left:7px solid transparent"></div>
<svg style="left:328px;top:324px" width="18" height="16" viewBox="0 0 18 16"><path d="M3 2 H15 V9 H12 V5 H6 V9 H3Z" fill="#9a9a9e"/><path d="M1 14 Q5 10 9 13 Q13 16 17 12" stroke="#ccc" stroke-width="1.3" fill="none"/></svg>
<div class="a" style="left:342px;top:339px;width:0;height:0;border-bottom:7px solid #c8c8cc;border-left:7px solid transparent"></div>
<svg style="left:327px;top:355px" width="19" height="17" viewBox="0 0 19 17"><circle cx="5" cy="3" r="2.5" fill="#6e6e72"/><path d="M1 17 V7 H9 V17Z" fill="#6e6e72"/><path d="M10 8 H18 V14 H16 V11 H12 V14 H10Z" fill="#7a7a7e"/></svg>
<div class="a" style="left:322px;top:403px;width:0;height:0;border-top:3.5px solid transparent;border-bottom:3.5px solid transparent;border-left:6px solid #8c8c90"></div>
<svg style="left:328px;top:402px" width="17" height="17" viewBox="0 0 17 17"><path d="M2 16 L12 5" stroke="#c8c8cc" stroke-width="1.4"/><circle cx="13" cy="4" r="2.6" fill="#e8e8e8"/></svg>
<svg style="left:326px;top:433px" width="20" height="19" viewBox="0 0 20 19"><path d="M2 9 Q5 2 12 3 L15 12 Q9 16 4 14Z" fill="#9a9a9e"/><path d="M3 12 Q9 4 14 7" stroke="#ddd" stroke-width="1.3" fill="none"/><circle cx="15" cy="11" r="2.3" fill="#eee"/></svg>
<div class="a" style="left:342px;top:449px;width:0;height:0;border-bottom:7px solid #c8c8cc;border-left:7px solid transparent"></div>
<svg style="left:326px;top:483px" width="20" height="19" viewBox="0 0 20 19"><path d="M2 7 L10 3 L18 7 V15 L10 18 L2 15Z" fill="none" stroke="#bbb" stroke-width="1.2"/><path d="M8 6 L14 12 M14 8 V12 H10" stroke="#eee" stroke-width="1.6" fill="none"/></svg>
<svg style="left:326px;top:515px" width="20" height="18" viewBox="0 0 20 18"><path d="M3 4 L7 1 L10 4 L13 1 L17 4 L19 16 H1Z" fill="#7c7c80"/><path d="M10 4 V16 M5 9 H15" stroke="#555" stroke-width="1"/></svg>
<svg style="left:326px;top:547px" width="20" height="18" viewBox="0 0 20 18"><path d="M1 4 L6 1 H9 V8 H1Z M11 1 H14 L19 4 V8 H11Z M3 10 H9 V17 H3Z M11 10 H17 V17 H11Z" fill="#a6a6aa"/></svg>
<svg style="left:327px;top:578px" width="18" height="20" viewBox="0 0 18 20"><circle cx="9" cy="3" r="2.5" fill="#9a9a9e"/><path d="M1 7 L8 9 V19 L1 17Z M17 7 L10 9 V19 L17 17Z" fill="#b4b4b8"/><rect x="7" y="5" width="4" height="5" fill="#888"/></svg>
<svg style="left:327px;top:611px" width="18" height="21" viewBox="0 0 18 21"><path d="M2 1 A3 3 0 1 1 5 5" stroke="#ccc" stroke-width="1.1" fill="none"/><circle cx="9" cy="4" r="2.5" fill="#9a9a9e"/><path d="M1 8 L8 10 V20 L1 18Z M17 8 L10 10 V20 L17 18Z" fill="#b4b4b8"/></svg>
<svg style="left:326px;top:645px" width="20" height="18" viewBox="0 0 20 18"><circle cx="10" cy="3" r="2.8" fill="#a0a0a4"/><path d="M1 11 L6 6 H14 L19 11 L16 13 V17 H4 V13Z" fill="#a0a0a4"/></svg>
<svg style="left:326px;top:692px" width="20" height="21" viewBox="0 0 20 21"><path d="M2 5 L6 2 Q9 4 11 2 V18 H4 V9 L1 8Z" fill="#b8b8bc"/><path d="M16 19 V3 M13 6 L16 2 L19 6" stroke="#eee" stroke-width="1.5" fill="none"/></svg>
<div class="a" style="left:344px;top:709px;width:0;height:0;border-bottom:7px solid #c8c8cc;border-left:7px solid transparent"></div>
<div class="a" style="left:321px;top:737px;width:29px;height:26px;background:#0f0f11;border-radius:4px;border:1px solid #555"></div>
<div class="a" style="left:323px;top:742px;width:0;height:0;border-top:3.5px solid transparent;border-bottom:3.5px solid transparent;border-left:6px solid #8c8c90"></div>
<svg style="left:326px;top:741px" width="20" height="20" viewBox="0 0 20 20"><path d="M4 4 Q2 14 10 16 Q16 17 18 12" fill="none" stroke="#2f8de8" stroke-width="2.6"/><path d="M5 9 L7 9 M7 14 L9 13 M12 16 L12 14 M16 14 L15 12.5" stroke="#bde" stroke-width="1"/></svg>
<div class="a" style="left:343px;top:755px;width:0;height:0;border-bottom:7px solid #c8c8cc;border-left:7px solid transparent"></div>
<svg style="left:327px;top:772px" width="18" height="18" viewBox="0 0 18 18"><path d="M1 14 L13 2 L17 6 L5 18Z" fill="#a8a8ac"/><path d="M4 11 L6 13 M6.5 8.5 L8.5 10.5 M9 6 L11 8 M11.5 3.5 L13.5 5.5" stroke="#666" stroke-width="1"/></svg>
<div class="a" style="left:342px;top:788px;width:0;height:0;border-bottom:7px solid #c8c8cc;border-left:7px solid transparent"></div>
<div class="a" style="left:322px;top:821px;width:0;height:0;border-top:3.5px solid transparent;border-bottom:3.5px solid transparent;border-left:6px solid #8c8c90"></div>
<svg style="left:327px;top:820px" width="20" height="18" viewBox="0 0 20 18"><g transform="scale(0.95)"><path d="M3 3 L7 1 Q10 3 13 1 L17 3 L20 8 L16 10 V18 H4 V10 L0 8Z" fill="#a8a8ac"/><path d="M6 7 H14 V14 H6Z" fill="#ddd"/><path d="M8 7 V14 M10 7 V14 M12 7 V14" stroke="#666" stroke-width="0.8"/></g></svg>
<svg style="left:327px;top:852px" width="20" height="18" viewBox="0 0 20 18"><g transform="scale(0.95)"><path d="M3 3 L7 1 Q10 3 13 1 L17 3 L20 8 L16 10 V18 H4 V10 L0 8Z" fill="#a8a8ac"/><path d="M6 7 H14 V14 H6Z" fill="#ddd"/><path d="M8 7 V14 M10 7 V14 M12 7 V14" stroke="#666" stroke-width="0.8"/></g></svg>
<div class="a" style="left:343px;top:868px;width:0;height:0;border-bottom:7px solid #c8c8cc;border-left:7px solid transparent"></div>
<div class="a" style="left:360px;top:85px;width:0;height:0;border-top:3.5px solid transparent;border-bottom:3.5px solid transparent;border-left:6px solid #8c8c90"></div>
<svg style="left:366px;top:84px" width="17" height="19" viewBox="0 0 17 19"><circle cx="10" cy="2.8" r="2.3" fill="#6a6a6e"/><path d="M9 6 L5 12 L1 17 M9 6 L11 12 L8 18 M10 7 L15 9 M7 8 L4 9" stroke="#6a6a6e" stroke-width="2.4" stroke-linecap="round" fill="none"/></svg>
<div class="a" style="left:360px;top:134px;width:0;height:0;border-top:3.5px solid transparent;border-bottom:3.5px solid transparent;border-left:6px solid #8c8c90"></div>
<svg style="left:364px;top:133px" width="21" height="19" viewBox="0 0 21 19"><path d="M3 3 L7 1 Q10 3 13 1 L17 3 L20 8 L16 10 V18 H4 V10 L0 8Z" fill="#8e8e92"/><path d="M2 10 Q8 4 10 10 Q12 15 18 9" stroke="#e8e8e8" stroke-width="1.6" fill="none"/><path d="M13 9 L20 1 L21 3 L15 10Z" fill="#f0f0f0"/></svg>
<svg style="left:364px;top:160px" width="21" height="19" viewBox="0 0 21 19"><path d="M3 3 L7 1 Q10 3 13 1 L17 3 L20 8 L16 10 V18 H4 V10 L0 8Z" fill="#8e8e92"/><path d="M2 10 Q8 4 10 10 Q12 15 18 9" stroke="#e8e8e8" stroke-width="1.6" fill="none"/><path d="M13 9 L20 1 L21 3 L15 10Z" fill="#f0f0f0"/></svg>
<svg style="left:364px;top:195px" width="21" height="19" viewBox="0 0 21 19"><path d="M3 3 L7 1 Q10 3 13 1 L17 3 L20 8 L16 10 V18 H4 V10 L0 8Z" fill="#8e8e92"/><path d="M2 10 Q8 4 10 10 Q12 15 18 9" stroke="#e8e8e8" stroke-width="1.6" fill="none"/><path d="M13 9 L20 1 L21 3 L15 10Z" fill="#f0f0f0"/></svg>
<div class="a" style="left:360px;top:243px;width:0;height:0;border-top:3.5px solid transparent;border-bottom:3.5px solid transparent;border-left:6px solid #8c8c90"></div>
<svg style="left:364px;top:242px" width="21" height="19" viewBox="0 0 21 19"><path d="M3 3 L7 1 Q10 3 13 1 L17 3 L20 8 L16 10 V18 H4 V10 L0 8Z" fill="#8e8e92"/><path d="M2 10 Q8 4 10 10 Q12 15 18 9" stroke="#e8e8e8" stroke-width="1.6" fill="none"/><path d="M13 9 L20 1 L21 3 L15 10Z" fill="#f0f0f0"/></svg>
<svg style="left:364px;top:278px" width="21" height="19" viewBox="0 0 21 19"><path d="M3 3 L7 1 Q10 3 13 1 L17 3 L20 8 L16 10 V18 H4 V10 L0 8Z" fill="#8e8e92"/><path d="M2 10 Q8 4 10 10 Q12 15 18 9" stroke="#e8e8e8" stroke-width="1.6" fill="none"/><path d="M13 9 L20 1 L21 3 L15 10Z" fill="#f0f0f0"/></svg>
<div class="a" style="left:380px;top:295px;width:0;height:0;border-bottom:7px solid #c8c8cc;border-left:7px solid transparent"></div>
<div class="a" style="left:360px;top:325px;width:0;height:0;border-top:3.5px solid transparent;border-bottom:3.5px solid transparent;border-left:6px solid #8c8c90"></div>
<svg style="left:364px;top:324px" width="20" height="18" viewBox="0 0 20 18"><path d="M9 2 Q15 0 18 3 L15 17 Q10 14 7 16Z" fill="#c0c0c4"/><rect x="1.0" y="7.0" width="2.5" height="2.5" fill="#222"/><rect x="6.0" y="7.0" width="2.5" height="2.5" fill="#222"/><rect x="3.5" y="9.5" width="2.5" height="2.5" fill="#222"/><rect x="8.5" y="9.5" width="2.5" height="2.5" fill="#222"/><rect x="1.0" y="12.0" width="2.5" height="2.5" fill="#222"/><rect x="6.0" y="12.0" width="2.5" height="2.5" fill="#222"/><rect x="3.5" y="14.5" width="2.5" height="2.5" fill="#222"/><rect x="8.5" y="14.5" width="2.5" height="2.5" fill="#222"/></svg>
<div class="a" style="left:360px;top:356px;width:0;height:0;border-top:3.5px solid transparent;border-bottom:3.5px solid transparent;border-left:6px solid #8c8c90"></div>
<svg style="left:365px;top:355px" width="20" height="18" viewBox="0 0 20 18"><g transform="scale(0.95)"><path d="M3 3 L7 1 Q10 3 13 1 L17 3 L20 8 L16 10 V18 H4 V10 L0 8Z" fill="#b4b4b8"/><rect x="6.0" y="7.0" width="2.2" height="2.2" fill="#333"/><rect x="10.4" y="7.0" width="2.2" height="2.2" fill="#333"/><rect x="8.2" y="9.2" width="2.2" height="2.2" fill="#333"/><rect x="12.600000000000001" y="9.2" width="2.2" height="2.2" fill="#333"/><rect x="6.0" y="11.4" width="2.2" height="2.2" fill="#333"/><rect x="10.4" y="11.4" width="2.2" height="2.2" fill="#333"/><rect x="8.2" y="13.600000000000001" width="2.2" height="2.2" fill="#333"/><rect x="12.600000000000001" y="13.600000000000001" width="2.2" height="2.2" fill="#333"/></g></svg>
<svg style="left:365px;top:383px" width="20" height="18" viewBox="0 0 20 18"><g transform="scale(0.95)"><path d="M3 3 L7 1 Q10 3 13 1 L17 3 L20 8 L16 10 V18 H4 V10 L0 8Z" fill="#b4b4b8"/><rect x="6.0" y="7.0" width="2.2" height="2.2" fill="#333"/><rect x="10.4" y="7.0" width="2.2" height="2.2" fill="#333"/><rect x="8.2" y="9.2" width="2.2" height="2.2" fill="#333"/><rect x="12.600000000000001" y="9.2" width="2.2" height="2.2" fill="#333"/><rect x="6.0" y="11.4" width="2.2" height="2.2" fill="#333"/><rect x="10.4" y="11.4" width="2.2" height="2.2" fill="#333"/><rect x="8.2" y="13.600000000000001" width="2.2" height="2.2" fill="#333"/><rect x="12.600000000000001" y="13.600000000000001" width="2.2" height="2.2" fill="#333"/></g></svg>
<div class="a" style="left:360px;top:435px;width:0;height:0;border-top:3.5px solid transparent;border-bottom:3.5px solid transparent;border-left:6px solid #8c8c90"></div>
<svg style="left:365px;top:434px" width="19" height="16" viewBox="0 0 19 16"><circle cx="10" cy="8" r="7.5" fill="#a6a6aa"/><circle cx="8" cy="6" r="1.2" fill="#333"/><circle cx="12" cy="6" r="1.2" fill="#333"/><circle cx="8" cy="10" r="1.2" fill="#333"/><circle cx="12" cy="10" r="1.2" fill="#333"/><path d="M0 8 H3" stroke="#ccc"/></svg>
<svg style="left:365px;top:468px" width="18" height="18" viewBox="0 0 18 18"><circle cx="9" cy="9" r="8.5" fill="#a6a6aa"/><circle cx="6.5" cy="6.5" r="1.4" fill="#333"/><circle cx="11.5" cy="6.5" r="1.4" fill="#333"/><circle cx="6.5" cy="11.5" r="1.4" fill="#333"/><circle cx="11.5" cy="11.5" r="1.4" fill="#333"/></svg>
<div class="a" style="left:380px;top:482px;width:0;height:0;border-bottom:7px solid #c8c8cc;border-left:7px solid transparent"></div>
<svg style="left:360px;top:499px" width="22" height="20" viewBox="0 0 22 20"><rect x="0" y="4" width="6" height="5" rx="1" fill="#ccc"/><rect x="8" y="1" width="11" height="18" rx="5.5" fill="none" stroke="#ccc" stroke-width="1.3"/><circle cx="13.5" cy="10" r="4.5" fill="#a6a6aa"/></svg>
<div class="a" style="left:360px;top:548px;width:0;height:0;border-top:3.5px solid transparent;border-bottom:3.5px solid transparent;border-left:6px solid #8c8c90"></div>
<svg style="left:365px;top:546px" width="18" height="20" viewBox="0 0 18 20"><path d="M1 3 H17 V19 H1Z" fill="#909094"/><rect x="6" y="1" width="6" height="18" rx="3" fill="#d8d8dc"/><path d="M7.5 5 H10.5 M7.5 8 H10.5 M7.5 11 H10.5" stroke="#555" stroke-width="1"/></svg>
<svg style="left:365px;top:578px" width="18" height="20" viewBox="0 0 18 20"><path d="M1 3 H17 V19 H1Z" fill="#909094"/><rect x="6" y="1" width="6" height="18" rx="3" fill="#d8d8dc"/><path d="M7.5 5 H10.5 M7.5 8 H10.5 M7.5 11 H10.5 M7.5 14 H10.5" stroke="#555" stroke-width="1"/></svg>
<div class="a" style="left:360px;top:627px;width:0;height:0;border-top:3.5px solid transparent;border-bottom:3.5px solid transparent;border-left:6px solid #8c8c90"></div>
<svg style="left:366px;top:628px" width="18" height="18" viewBox="0 0 18 18"><path d="M1 2 H13 V17 H1Z" fill="#a0a0a4"/><rect x="13" y="1" width="4" height="16" rx="2" fill="#e6e6e6"/></svg>
<svg style="left:365px;top:660px" width="19" height="18" viewBox="0 0 19 18"><path d="M1 2 H14 V17 H1Z" fill="#a0a0a4"/><rect x="14" y="1" width="4" height="16" rx="2" fill="#e6e6e6"/></svg>
<div class="a" style="left:360px;top:708px;width:0;height:0;border-top:3.5px solid transparent;border-bottom:3.5px solid transparent;border-left:6px solid #8c8c90"></div>
<svg style="left:366px;top:708px" width="18" height="16" viewBox="0 0 18 16"><rect x="1" y="1" width="12" height="14" fill="#a0a0a4"/><rect x="13" y="1" width="4" height="14" fill="#eee"/></svg>
<svg style="left:365px;top:741px" width="19" height="17" viewBox="0 0 19 17"><rect x="1" y="1" width="13" height="15" fill="#a0a0a4"/><rect x="14" y="1" width="4" height="15" fill="#eee"/></svg>
<svg style="left:363px;top:786px" width="22" height="18" viewBox="0 0 22 18"><path d="M8 1 V12 Q11 15 14 12 V1" fill="none" stroke="#ddd" stroke-width="2.4"/><path d="M1 9 H5 M3 7 L5 9 L3 11 M21 9 H17 M19 7 L17 9 L19 11" stroke="#eee" stroke-width="1.2" fill="none"/></svg>
<svg style="left:0;top:0" width="400" height="600" viewBox="0 0 400 600">
<path d="M172 397 Q195 396 215 400" stroke="#1c2230" stroke-width="2" fill="none" opacity="0.8"/>
<g transform="translate(153.07 296.31) scale(0.1095)">
<path d="M608.5 205.0 C601.5 209.2 609.4 223.8 608.5 230.0 C607.6 236.2 606.1 238.7 603.0 242.0 C599.9 245.3 595.2 247.7 590.0 250.0 C584.8 252.3 577.7 254.0 572.0 256.0 C566.3 258.0 560.7 259.7 556.0 262.0 C551.3 264.3 547.7 266.3 544.0 270.0 C540.3 273.7 537.0 279.3 534.0 284.0 C531.0 288.7 529.7 292.3 526.0 298.0 C522.3 303.7 517.0 311.3 512.0 318.0 C507.0 324.7 501.3 331.7 496.0 338.0 C490.7 344.3 485.3 350.7 480.0 356.0 C474.7 361.3 470.2 363.8 464.0 370.0 C457.8 376.2 451.0 384.0 443.0 393.0 C435.0 402.0 423.5 415.2 416.0 424.0 C408.5 432.8 402.7 440.8 398.0 446.0 C393.3 451.2 391.7 450.2 388.0 455.0 C384.3 459.8 377.3 466.7 376.0 475.0 C374.7 483.3 376.5 502.8 380.0 505.0 C383.5 507.2 392.7 493.2 397.0 488.0 C401.3 482.8 404.2 478.0 406.0 474.0 C407.8 470.0 407.3 466.7 408.0 464.0 C408.7 461.3 406.2 462.0 410.0 458.0 C413.8 454.0 423.0 446.0 431.0 440.0 C439.0 434.0 448.2 430.2 458.0 422.0 C467.8 413.8 481.0 400.7 490.0 391.0 C499.0 381.3 504.5 373.3 512.0 364.0 C519.5 354.7 528.2 343.5 535.0 335.0 C541.8 326.5 548.3 315.2 553.0 313.0 C557.7 310.8 560.2 317.5 563.0 322.0 C565.8 326.5 568.3 333.7 570.0 340.0 C571.7 346.3 572.0 353.3 573.0 360.0 C574.0 366.7 575.2 373.2 576.0 380.0 C576.8 386.8 578.7 392.7 578.0 401.0 C577.3 409.3 574.5 420.5 572.0 430.0 C569.5 439.5 566.2 448.0 563.0 458.0 C559.8 468.0 555.3 480.2 553.0 490.0 C550.7 499.8 550.0 507.2 549.0 517.0 C548.0 526.8 546.8 538.5 547.0 549.0 C547.2 559.5 548.5 569.3 550.0 580.0 C551.5 590.7 554.0 601.3 556.0 613.0 C558.0 624.7 560.3 636.5 562.0 650.0 C563.7 663.5 565.8 681.5 566.0 694.0 C566.2 706.5 563.8 714.2 563.0 725.0 C562.2 735.8 560.5 746.5 561.0 759.0 C561.5 771.5 564.2 786.5 566.0 800.0 C567.8 813.5 570.5 828.0 572.0 840.0 C573.5 852.0 574.8 863.7 575.0 872.0 C575.2 880.3 573.8 883.3 573.0 890.0 C572.2 896.7 570.8 905.0 570.0 912.0 C569.2 919.0 568.0 926.8 568.0 932.0 C568.0 937.2 568.5 940.4 570.0 943.0 C571.5 945.6 573.3 946.8 577.0 947.5 C580.7 948.2 588.0 948.1 592.0 947.5 C596.0 946.9 598.9 946.6 601.0 944.0 C603.1 941.4 603.9 937.3 604.5 932.0 C605.1 926.7 604.2 918.5 604.5 912.0 C604.8 905.5 606.6 899.0 606.0 893.0 C605.4 887.0 601.5 884.8 601.0 876.0 C600.5 867.2 602.0 852.7 603.0 840.0 C604.0 827.3 606.2 813.5 607.0 800.0 C607.8 786.5 607.9 770.7 608.0 759.0 C608.1 747.3 606.5 740.8 607.5 730.0 C608.5 719.2 612.2 707.3 614.0 694.0 C615.8 680.7 617.0 663.5 618.0 650.0 C619.0 636.5 619.0 626.3 620.0 613.0 C621.0 599.7 623.0 580.7 624.0 570.0 C625.0 559.3 625.1 554.5 626.0 549.0 C626.9 543.5 628.3 537.0 629.5 537.0 C630.7 537.0 632.1 543.5 633.0 549.0 C633.9 554.5 634.0 559.3 635.0 570.0 C636.0 580.7 638.0 599.7 639.0 613.0 C640.0 626.3 640.0 636.5 641.0 650.0 C642.0 663.5 643.2 680.7 645.0 694.0 C646.8 707.3 650.5 719.2 651.5 730.0 C652.5 740.8 650.9 747.3 651.0 759.0 C651.1 770.7 651.2 786.5 652.0 800.0 C652.8 813.5 655.0 827.3 656.0 840.0 C657.0 852.7 658.5 867.2 658.0 876.0 C657.5 884.8 653.6 887.0 653.0 893.0 C652.4 899.0 654.2 905.5 654.5 912.0 C654.8 918.5 653.9 926.7 654.5 932.0 C655.1 937.3 655.9 941.4 658.0 944.0 C660.1 946.6 663.0 946.9 667.0 947.5 C671.0 948.1 678.3 948.2 682.0 947.5 C685.7 946.8 687.5 945.6 689.0 943.0 C690.5 940.4 691.0 937.2 691.0 932.0 C691.0 926.8 689.8 919.0 689.0 912.0 C688.2 905.0 686.8 896.7 686.0 890.0 C685.2 883.3 683.8 880.3 684.0 872.0 C684.2 863.7 685.5 852.0 687.0 840.0 C688.5 828.0 691.2 813.5 693.0 800.0 C694.8 786.5 697.5 771.5 698.0 759.0 C698.5 746.5 696.8 735.8 696.0 725.0 C695.2 714.2 692.8 706.5 693.0 694.0 C693.2 681.5 695.3 663.5 697.0 650.0 C698.7 636.5 701.0 624.7 703.0 613.0 C705.0 601.3 707.5 590.7 709.0 580.0 C710.5 569.3 711.8 559.5 712.0 549.0 C712.2 538.5 711.0 526.8 710.0 517.0 C709.0 507.2 708.3 499.8 706.0 490.0 C703.7 480.2 699.2 468.0 696.0 458.0 C692.8 448.0 689.5 439.5 687.0 430.0 C684.5 420.5 681.7 409.3 681.0 401.0 C680.3 392.7 682.2 386.8 683.0 380.0 C683.8 373.2 685.0 366.7 686.0 360.0 C687.0 353.3 687.3 346.3 689.0 340.0 C690.7 333.7 693.2 326.5 696.0 322.0 C698.8 317.5 701.3 310.8 706.0 313.0 C710.7 315.2 717.2 326.5 724.0 335.0 C730.8 343.5 739.5 354.7 747.0 364.0 C754.5 373.3 760.0 381.3 769.0 391.0 C778.0 400.7 791.2 413.8 801.0 422.0 C810.8 430.2 820.0 434.0 828.0 440.0 C836.0 446.0 845.2 454.0 849.0 458.0 C852.8 462.0 850.3 461.3 851.0 464.0 C851.7 466.7 851.2 470.0 853.0 474.0 C854.8 478.0 857.7 482.8 862.0 488.0 C866.3 493.2 875.5 507.2 879.0 505.0 C882.5 502.8 884.3 483.3 883.0 475.0 C881.7 466.7 874.7 459.8 871.0 455.0 C867.3 450.2 865.7 451.2 861.0 446.0 C856.3 440.8 850.5 432.8 843.0 424.0 C835.5 415.2 824.0 402.0 816.0 393.0 C808.0 384.0 801.2 376.2 795.0 370.0 C788.8 363.8 784.3 361.3 779.0 356.0 C773.7 350.7 768.3 344.3 763.0 338.0 C757.7 331.7 752.0 324.7 747.0 318.0 C742.0 311.3 736.7 303.7 733.0 298.0 C729.3 292.3 728.0 288.7 725.0 284.0 C722.0 279.3 718.7 273.7 715.0 270.0 C711.3 266.3 707.7 264.3 703.0 262.0 C698.3 259.7 692.7 258.0 687.0 256.0 C681.3 254.0 674.2 252.3 669.0 250.0 C663.8 247.7 659.1 245.3 656.0 242.0 C652.9 238.7 651.4 236.2 650.5 230.0 C649.6 223.8 657.5 209.2 650.5 205.0 C643.5 200.8 615.5 200.8 608.5 205.0 Z" fill="#d6a588"/>
<path d="M629.5 126.5 C624.3 126.5 618.4 126.8 614.0 128.5 C609.6 130.2 605.7 133.4 603.0 137.0 C600.3 140.6 599.0 145.3 598.0 150.0 C597.0 154.7 596.8 159.8 597.0 165.0 C597.2 170.2 598.2 176.2 599.0 181.0 C599.8 185.8 600.7 190.3 602.0 194.0 C603.3 197.7 605.0 200.3 607.0 203.0 C609.0 205.7 611.7 208.2 614.0 210.0 C616.3 211.8 618.4 212.8 621.0 213.5 C623.6 214.2 626.7 214.5 629.5 214.5 C632.3 214.5 635.4 214.2 638.0 213.5 C640.6 212.8 642.7 211.8 645.0 210.0 C647.3 208.2 650.0 205.7 652.0 203.0 C654.0 200.3 655.7 197.7 657.0 194.0 C658.3 190.3 659.2 185.8 660.0 181.0 C660.8 176.2 661.8 170.2 662.0 165.0 C662.2 159.8 662.0 154.7 661.0 150.0 C660.0 145.3 658.7 140.6 656.0 137.0 C653.3 133.4 649.4 130.2 645.0 128.5 C640.6 126.8 634.7 126.5 629.5 126.5 Z" fill="#cf9c80"/>
<path d="M600 150 Q629 110 660 150 L655 135 Q629 118 603 135Z" fill="#3a2a22"/>
<path d="M561 466 Q629.5 480 698 466 L706 490 Q660 500 636 536 L623 536 Q599 500 553 490Z" fill="#e8c8ae" opacity="0.6"/>
<path d="M566 930 L604 930 L606 950 L566 950Z M653 930 L693 930 L693 950 L653 950Z" fill="#111"/>
</g></svg>
<svg style="left:100px;top:452px" width="28" height="96" viewBox="0 0 28 96"><path d="M8 8 Q10 2 16 3 Q22 4 21 12 L20 18 L10 18Z" fill="#cfcfd6"/>
<path d="M8 6 Q14 0 20 6" stroke="#9c90e0" stroke-width="1.5" fill="none"/>
<path d="M16 7 Q20 8 19 16 L15 17Z" fill="#a08070"/>
<path d="M5 20 Q8 16 15 17 Q21 17 22 22 L24 50 Q24 56 22 60 L23 72 H6 L5 60 L2 56 L3 40Z" fill="#e6e6ea"/>
<path d="M15 19 L13 72" stroke="#9c8ee6" stroke-width="1.2"/>
<path d="M3 36 L10 35 M14 36 L20 35" stroke="#333" stroke-width="2.5"/>
<path d="M7 72 L8 88 H12 L13 72Z M14 72 L15 88 H19 L18 72Z" fill="#b48a70"/>
<path d="M6 87 H14 L16 92 H6Z M14 87 H20 L24 92 H15Z" fill="#1a1a1a"/>
<path d="M10 92 Q18 95 24 92" stroke="#aaa" stroke-width="1" fill="none"/></svg>
</body></html>
